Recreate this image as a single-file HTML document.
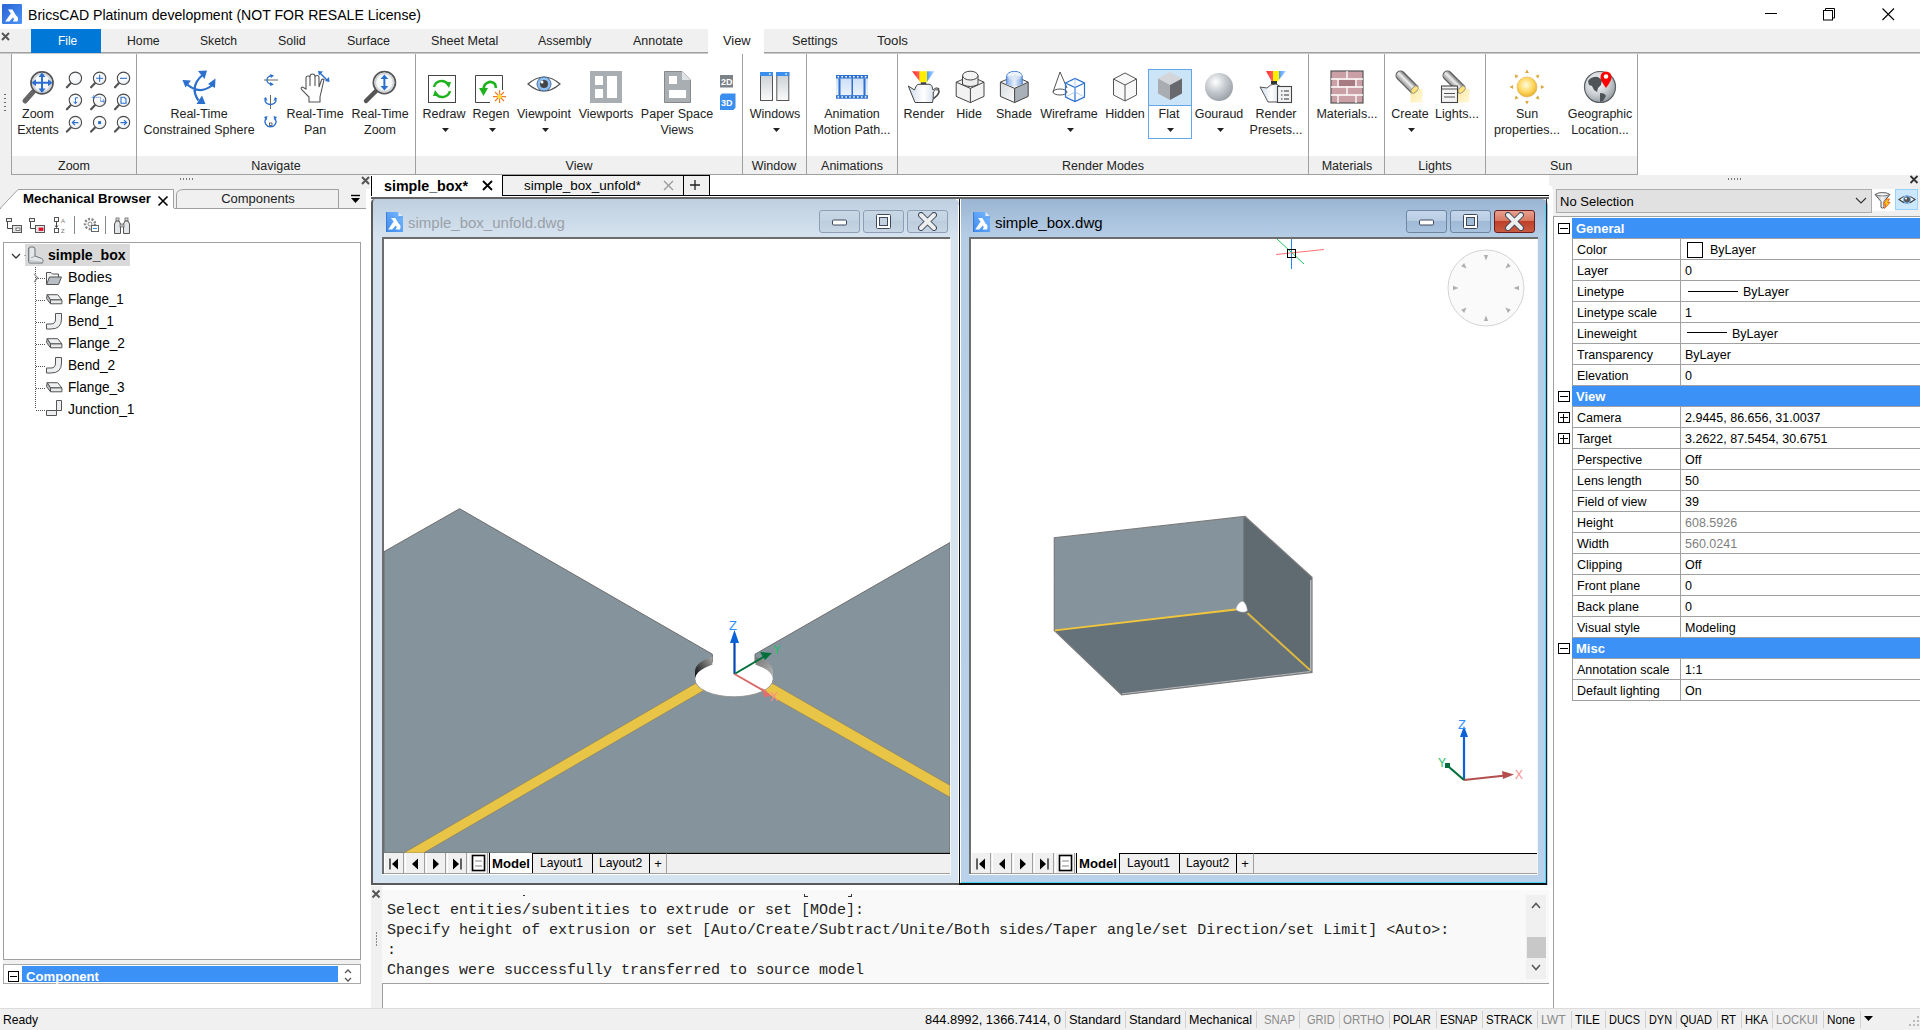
<!DOCTYPE html><html><head><meta charset="utf-8"><style>
html,body{margin:0;padding:0}
body{width:1920px;height:1030px;position:relative;overflow:hidden;background:#fff;font-family:"Liberation Sans",sans-serif;}
.t{position:absolute;white-space:nowrap}
.b{position:absolute;box-sizing:border-box}
.m{font-family:"Liberation Mono",monospace}
</style></head><body>
<svg class="b" style="left:2px;top:4px;" width="20" height="20" viewBox="0 0 20 20"><defs><linearGradient id="ag" x1="0" y1="0" x2="1" y2="1"><stop offset="0" stop-color="#2a62d6"/><stop offset="1" stop-color="#4a94f5"/></linearGradient></defs><rect x="0" y="0" width="20" height="20" rx="1" fill="url(#ag)"/><path d="M6 5.5 H10.5 L14 11.5 Q16.3 12.7 16.1 15.5 L15.5 17.4 H10.8 L12.1 15.2 L11 13.6 L7.3 17.4 H3.2 L8.8 9.6 Z" fill="#fff"/></svg>
<div class="t " style="left:27.8px;top:0.00px;height:30px;line-height:30px;font-size:15px;color:#000;font-weight:normal;transform:scaleX(0.9397);transform-origin:0 50%;">BricsCAD Platinum development (NOT FOR RESALE License)</div>
<div class="b" style="left:1765px;top:13px;width:12px;height:1px;background:#000;"></div>
<svg class="b" style="left:1823px;top:8px;" width="13" height="13" viewBox="0 0 13 13"><rect x="0.5" y="2.5" width="9" height="9.5" fill="none" stroke="#000"/><path d="M2.5 2.5 V0.5 H11.5 V10 H9.5" fill="none" stroke="#000"/></svg>
<svg class="b" style="left:1882px;top:8px;" width="13" height="13" viewBox="0 0 13 13"><path d="M0.5 0.5 L12 12 M12 0.5 L0.5 12" stroke="#000" stroke-width="1.1"/></svg>
<div class="b" style="left:0px;top:29px;width:1920px;height:23px;background:#f0f0f0;"></div>
<svg class="b" style="left:1px;top:32px;" width="9" height="9" viewBox="0 0 9 9"><path d="M1 1 L8 8 M8 1 L1 8" stroke="#555" stroke-width="2"/></svg>
<div class="b" style="left:31px;top:29px;width:70px;height:24px;background:#0078d7;"></div>
<div class="t " style="left:57.8px;top:27.90px;height:26.8px;line-height:26.8px;font-size:13.4px;color:#fff;font-weight:normal;transform:scaleX(0.8885);transform-origin:0 50%;">File</div>
<div class="b" style="left:708px;top:29px;width:56px;height:24px;background:#fff;"></div>
<div class="t " style="left:127.1px;top:27.50px;height:26.8px;line-height:26.8px;font-size:13.4px;color:#222;font-weight:normal;transform:scaleX(0.9143);transform-origin:0 50%;">Home</div>
<div class="t " style="left:200.4px;top:27.50px;height:26.8px;line-height:26.8px;font-size:13.4px;color:#222;font-weight:normal;transform:scaleX(0.9052);transform-origin:0 50%;">Sketch</div>
<div class="t " style="left:278.1px;top:27.50px;height:26.8px;line-height:26.8px;font-size:13.4px;color:#222;font-weight:normal;transform:scaleX(0.9291);transform-origin:0 50%;">Solid</div>
<div class="t " style="left:346.5px;top:27.50px;height:26.8px;line-height:26.8px;font-size:13.4px;color:#222;font-weight:normal;transform:scaleX(0.9328);transform-origin:0 50%;">Surface</div>
<div class="t " style="left:430.6px;top:27.50px;height:26.8px;line-height:26.8px;font-size:13.4px;color:#222;font-weight:normal;transform:scaleX(0.9406);transform-origin:0 50%;">Sheet Metal</div>
<div class="t " style="left:538.3px;top:27.50px;height:26.8px;line-height:26.8px;font-size:13.4px;color:#222;font-weight:normal;transform:scaleX(0.9224);transform-origin:0 50%;">Assembly</div>
<div class="t " style="left:632.5px;top:27.50px;height:26.8px;line-height:26.8px;font-size:13.4px;color:#222;font-weight:normal;transform:scaleX(0.9316);transform-origin:0 50%;">Annotate</div>
<div class="t " style="left:723.1px;top:27.50px;height:26.8px;line-height:26.8px;font-size:13.4px;color:#222;font-weight:normal;transform:scaleX(0.9598);transform-origin:0 50%;">View</div>
<div class="t " style="left:791.5px;top:27.50px;height:26.8px;line-height:26.8px;font-size:13.4px;color:#222;font-weight:normal;transform:scaleX(0.9414);transform-origin:0 50%;">Settings</div>
<div class="t " style="left:876.9px;top:27.50px;height:26.8px;line-height:26.8px;font-size:13.4px;color:#222;font-weight:normal;transform:scaleX(0.9905);transform-origin:0 50%;">Tools</div>
<div class="b" style="left:0px;top:52px;width:1920px;height:1px;background:#a0a0a0;"></div>
<div class="b" style="left:0px;top:53px;width:1920px;height:1px;background:#cacaca;"></div>
<div class="b" style="left:708px;top:52px;width:56px;height:2px;background:#fff;"></div>
<div class="b" style="left:31px;top:52px;width:70px;height:1px;background:#0078d7;"></div>
<div class="b" style="left:0px;top:54px;width:11px;height:121px;background:#f0f0f0;"></div>
<div class="b" style="left:4px;top:94px;width:2px;height:1px;background:#666;"></div>
<div class="b" style="left:4px;top:98px;width:2px;height:1px;background:#666;"></div>
<div class="b" style="left:4px;top:102px;width:2px;height:1px;background:#666;"></div>
<div class="b" style="left:4px;top:106px;width:2px;height:1px;background:#666;"></div>
<div class="b" style="left:4px;top:110px;width:2px;height:1px;background:#666;"></div>
<div class="b" style="left:11px;top:54px;width:1627px;height:121px;border:1px solid #a0a0a0;border-top:none;background:#fff;"></div>
<div class="b" style="left:12px;top:156px;width:1625px;height:18px;background:#f0f0f0;"></div>
<div class="b" style="left:136px;top:54px;width:1px;height:120px;background:#a0a0a0;"></div>
<div class="b" style="left:415px;top:54px;width:1px;height:120px;background:#a0a0a0;"></div>
<div class="b" style="left:742px;top:54px;width:1px;height:120px;background:#a0a0a0;"></div>
<div class="b" style="left:806px;top:54px;width:1px;height:120px;background:#a0a0a0;"></div>
<div class="b" style="left:897px;top:54px;width:1px;height:120px;background:#a0a0a0;"></div>
<div class="b" style="left:1308px;top:54px;width:1px;height:120px;background:#a0a0a0;"></div>
<div class="b" style="left:1384px;top:54px;width:1px;height:120px;background:#a0a0a0;"></div>
<div class="b" style="left:1485px;top:54px;width:1px;height:120px;background:#a0a0a0;"></div>
<div class="t" style="left:-126px;width:400px;text-align:center;top:153.50px;height:25.0px;line-height:25.0px;font-size:12.5px;color:#222;font-weight:normal;">Zoom</div>
<div class="t" style="left:76px;width:400px;text-align:center;top:153.50px;height:25.0px;line-height:25.0px;font-size:12.5px;color:#222;font-weight:normal;">Navigate</div>
<div class="t" style="left:379px;width:400px;text-align:center;top:153.50px;height:25.0px;line-height:25.0px;font-size:12.5px;color:#222;font-weight:normal;">View</div>
<div class="t" style="left:574px;width:400px;text-align:center;top:153.50px;height:25.0px;line-height:25.0px;font-size:12.5px;color:#222;font-weight:normal;">Window</div>
<div class="t" style="left:652px;width:400px;text-align:center;top:153.50px;height:25.0px;line-height:25.0px;font-size:12.5px;color:#222;font-weight:normal;">Animations</div>
<div class="t" style="left:903px;width:400px;text-align:center;top:153.50px;height:25.0px;line-height:25.0px;font-size:12.5px;color:#222;font-weight:normal;">Render Modes</div>
<div class="t" style="left:1147px;width:400px;text-align:center;top:153.50px;height:25.0px;line-height:25.0px;font-size:12.5px;color:#222;font-weight:normal;">Materials</div>
<div class="t" style="left:1235px;width:400px;text-align:center;top:153.50px;height:25.0px;line-height:25.0px;font-size:12.5px;color:#222;font-weight:normal;">Lights</div>
<div class="t" style="left:1361px;width:400px;text-align:center;top:153.50px;height:25.0px;line-height:25.0px;font-size:12.5px;color:#222;font-weight:normal;">Sun</div>
<div class="b" style="left:1148px;top:69px;width:44px;height:70px;border:1px solid #63a7ea;"></div>
<div class="b" style="left:1149px;top:70px;width:42px;height:35px;background:#cce4f7;"></div>
<div class="b" style="left:1148px;top:105px;width:44px;height:1px;background:#63a7ea;"></div>
<div class="t" style="left:-162px;width:400px;text-align:center;top:101.50px;height:25.0px;line-height:25.0px;font-size:12.5px;color:#222;font-weight:normal;">Zoom</div>
<div class="t" style="left:-162px;width:400px;text-align:center;top:117.50px;height:25.0px;line-height:25.0px;font-size:12.5px;color:#222;font-weight:normal;">Extents</div>
<div class="t" style="left:-1px;width:400px;text-align:center;top:101.50px;height:25.0px;line-height:25.0px;font-size:12.5px;color:#222;font-weight:normal;">Real-Time</div>
<div class="t" style="left:-1px;width:400px;text-align:center;top:117.50px;height:25.0px;line-height:25.0px;font-size:12.5px;color:#222;font-weight:normal;">Constrained Sphere</div>
<div class="t" style="left:115px;width:400px;text-align:center;top:101.50px;height:25.0px;line-height:25.0px;font-size:12.5px;color:#222;font-weight:normal;">Real-Time</div>
<div class="t" style="left:115px;width:400px;text-align:center;top:117.50px;height:25.0px;line-height:25.0px;font-size:12.5px;color:#222;font-weight:normal;">Pan</div>
<div class="t" style="left:180px;width:400px;text-align:center;top:101.50px;height:25.0px;line-height:25.0px;font-size:12.5px;color:#222;font-weight:normal;">Real-Time</div>
<div class="t" style="left:180px;width:400px;text-align:center;top:117.50px;height:25.0px;line-height:25.0px;font-size:12.5px;color:#222;font-weight:normal;">Zoom</div>
<div class="t" style="left:244px;width:400px;text-align:center;top:101.50px;height:25.0px;line-height:25.0px;font-size:12.5px;color:#222;font-weight:normal;">Redraw</div>
<svg class="b" style="left:441.5px;top:127.5px;" width="8" height="5" viewBox="0 0 8 5"><path d="M0 0 H7 L3.5 4 Z" fill="#222"/></svg>
<div class="t" style="left:291px;width:400px;text-align:center;top:101.50px;height:25.0px;line-height:25.0px;font-size:12.5px;color:#222;font-weight:normal;">Regen</div>
<svg class="b" style="left:488.5px;top:127.5px;" width="8" height="5" viewBox="0 0 8 5"><path d="M0 0 H7 L3.5 4 Z" fill="#222"/></svg>
<div class="t" style="left:344px;width:400px;text-align:center;top:101.50px;height:25.0px;line-height:25.0px;font-size:12.5px;color:#222;font-weight:normal;">Viewpoint</div>
<svg class="b" style="left:541.5px;top:127.5px;" width="8" height="5" viewBox="0 0 8 5"><path d="M0 0 H7 L3.5 4 Z" fill="#222"/></svg>
<div class="t" style="left:406px;width:400px;text-align:center;top:101.50px;height:25.0px;line-height:25.0px;font-size:12.5px;color:#222;font-weight:normal;">Viewports</div>
<div class="t" style="left:477px;width:400px;text-align:center;top:101.50px;height:25.0px;line-height:25.0px;font-size:12.5px;color:#222;font-weight:normal;">Paper Space</div>
<div class="t" style="left:477px;width:400px;text-align:center;top:117.50px;height:25.0px;line-height:25.0px;font-size:12.5px;color:#222;font-weight:normal;">Views</div>
<div class="t" style="left:575px;width:400px;text-align:center;top:101.50px;height:25.0px;line-height:25.0px;font-size:12.5px;color:#222;font-weight:normal;">Windows</div>
<svg class="b" style="left:772.5px;top:127.5px;" width="8" height="5" viewBox="0 0 8 5"><path d="M0 0 H7 L3.5 4 Z" fill="#222"/></svg>
<div class="t" style="left:652px;width:400px;text-align:center;top:101.50px;height:25.0px;line-height:25.0px;font-size:12.5px;color:#222;font-weight:normal;">Animation</div>
<div class="t" style="left:652px;width:400px;text-align:center;top:117.50px;height:25.0px;line-height:25.0px;font-size:12.5px;color:#222;font-weight:normal;">Motion Path...</div>
<div class="t" style="left:724px;width:400px;text-align:center;top:101.50px;height:25.0px;line-height:25.0px;font-size:12.5px;color:#222;font-weight:normal;">Render</div>
<div class="t" style="left:769px;width:400px;text-align:center;top:101.50px;height:25.0px;line-height:25.0px;font-size:12.5px;color:#222;font-weight:normal;">Hide</div>
<div class="t" style="left:814px;width:400px;text-align:center;top:101.50px;height:25.0px;line-height:25.0px;font-size:12.5px;color:#222;font-weight:normal;">Shade</div>
<div class="t" style="left:869px;width:400px;text-align:center;top:101.50px;height:25.0px;line-height:25.0px;font-size:12.5px;color:#222;font-weight:normal;">Wireframe</div>
<svg class="b" style="left:1066.5px;top:127.5px;" width="8" height="5" viewBox="0 0 8 5"><path d="M0 0 H7 L3.5 4 Z" fill="#222"/></svg>
<div class="t" style="left:925px;width:400px;text-align:center;top:101.50px;height:25.0px;line-height:25.0px;font-size:12.5px;color:#222;font-weight:normal;">Hidden</div>
<div class="t" style="left:969px;width:400px;text-align:center;top:101.50px;height:25.0px;line-height:25.0px;font-size:12.5px;color:#222;font-weight:normal;">Flat</div>
<svg class="b" style="left:1166.5px;top:127.5px;" width="8" height="5" viewBox="0 0 8 5"><path d="M0 0 H7 L3.5 4 Z" fill="#222"/></svg>
<div class="t" style="left:1019px;width:400px;text-align:center;top:101.50px;height:25.0px;line-height:25.0px;font-size:12.5px;color:#222;font-weight:normal;">Gouraud</div>
<svg class="b" style="left:1216.5px;top:127.5px;" width="8" height="5" viewBox="0 0 8 5"><path d="M0 0 H7 L3.5 4 Z" fill="#222"/></svg>
<div class="t" style="left:1076px;width:400px;text-align:center;top:101.50px;height:25.0px;line-height:25.0px;font-size:12.5px;color:#222;font-weight:normal;">Render</div>
<div class="t" style="left:1076px;width:400px;text-align:center;top:117.50px;height:25.0px;line-height:25.0px;font-size:12.5px;color:#222;font-weight:normal;">Presets...</div>
<div class="t" style="left:1147px;width:400px;text-align:center;top:101.50px;height:25.0px;line-height:25.0px;font-size:12.5px;color:#222;font-weight:normal;">Materials...</div>
<div class="t" style="left:1210px;width:400px;text-align:center;top:101.50px;height:25.0px;line-height:25.0px;font-size:12.5px;color:#222;font-weight:normal;">Create</div>
<svg class="b" style="left:1407.5px;top:127.5px;" width="8" height="5" viewBox="0 0 8 5"><path d="M0 0 H7 L3.5 4 Z" fill="#222"/></svg>
<div class="t" style="left:1257px;width:400px;text-align:center;top:101.50px;height:25.0px;line-height:25.0px;font-size:12.5px;color:#222;font-weight:normal;">Lights...</div>
<div class="t" style="left:1327px;width:400px;text-align:center;top:101.50px;height:25.0px;line-height:25.0px;font-size:12.5px;color:#222;font-weight:normal;">Sun</div>
<div class="t" style="left:1327px;width:400px;text-align:center;top:117.50px;height:25.0px;line-height:25.0px;font-size:12.5px;color:#222;font-weight:normal;">properties...</div>
<div class="t" style="left:1400px;width:400px;text-align:center;top:101.50px;height:25.0px;line-height:25.0px;font-size:12.5px;color:#222;font-weight:normal;">Geographic</div>
<div class="t" style="left:1400px;width:400px;text-align:center;top:117.50px;height:25.0px;line-height:25.0px;font-size:12.5px;color:#222;font-weight:normal;">Location...</div>
<svg class="b" style="left:0;top:0" width="1920" height="180" viewBox="0 0 1920 180"><defs>
<radialGradient id="lens" cx="0.4" cy="0.35" r="0.7"><stop offset="0" stop-color="#fff"/><stop offset="0.7" stop-color="#f4f6f8"/><stop offset="1" stop-color="#d8dde2"/></radialGradient>
<linearGradient id="gwin" x1="0" y1="0" x2="0" y2="1"><stop offset="0" stop-color="#c8cdd2"/><stop offset="1" stop-color="#fbfbfb"/></linearGradient>
<linearGradient id="gfilm" x1="0" y1="0" x2="0" y2="1"><stop offset="0" stop-color="#c9dbf5"/><stop offset="1" stop-color="#f2f7fd"/></linearGradient>
<radialGradient id="gsph" cx="0.38" cy="0.32" r="0.7"><stop offset="0" stop-color="#fff"/><stop offset="0.5" stop-color="#c8ccd1"/><stop offset="1" stop-color="#9aa1a8"/></radialGradient>
<radialGradient id="gsun" cx="0.45" cy="0.4" r="0.6"><stop offset="0" stop-color="#fffbe0"/><stop offset="0.6" stop-color="#ffd860"/><stop offset="1" stop-color="#e8b030"/></radialGradient>
<radialGradient id="gglobe" cx="0.4" cy="0.35" r="0.7"><stop offset="0" stop-color="#fff"/><stop offset="0.6" stop-color="#c8ccd0"/><stop offset="1" stop-color="#8f969c"/></radialGradient>
<linearGradient id="gcyl" x1="0" y1="0" x2="1" y2="0"><stop offset="0" stop-color="#8fb3e6"/><stop offset="0.5" stop-color="#e6f0fc"/><stop offset="1" stop-color="#7ea6dc"/></linearGradient>
<linearGradient id="gspot" x1="0" y1="0" x2="1" y2="1"><stop offset="0" stop-color="#777"/><stop offset="0.5" stop-color="#e8e8e8"/><stop offset="1" stop-color="#9a9a9a"/></linearGradient>
<linearGradient id="gspot2" x1="0" y1="0" x2="0" y2="1"><stop offset="0" stop-color="#6a6a6a"/><stop offset="0.45" stop-color="#f0f0f0"/><stop offset="1" stop-color="#8a8a8a"/></linearGradient>
<linearGradient id="gcubeL" x1="0" y1="0" x2="1" y2="1"><stop offset="0" stop-color="#d8dce0"/><stop offset="1" stop-color="#fafafa"/></linearGradient>
<linearGradient id="gyel" x1="0" y1="0" x2="1" y2="1"><stop offset="0" stop-color="#ffe9a0"/><stop offset="1" stop-color="#fff8dc"/></linearGradient>
<linearGradient id="grays" x1="0" y1="0" x2="1" y2="0"><stop offset="0" stop-color="#ff2a2a"/><stop offset="0.33" stop-color="#ff6060"/><stop offset="0.34" stop-color="#ffee00"/><stop offset="0.66" stop-color="#ffee00"/><stop offset="0.67" stop-color="#4d9cff"/><stop offset="1" stop-color="#b0d4ff"/></linearGradient>
<linearGradient id="gpot" x1="0" y1="0" x2="1" y2="0"><stop offset="0" stop-color="#cfdcec"/><stop offset="0.5" stop-color="#fff"/><stop offset="1" stop-color="#c4d3e6"/></linearGradient>
</defs><path d="M33 92 L25 101" stroke="#666" stroke-width="5" stroke-linecap="round"/><circle cx="42" cy="82.8" r="11" fill="url(#lens)" stroke="#555" stroke-width="1.8"/><circle cx="42" cy="82.8" r="9.2" fill="none" stroke="#cfd3d6" stroke-width="1.8"/><path d="M42 74 V92 M33 82.8 H51" stroke="#2b6fcf" stroke-width="2"/><path d="M38.5 77 L42 72.5 L45.5 77 Z M38.5 88.6 L42 93 L45.5 88.6 Z M36 79.3 L31.5 82.8 L36 86.3 Z M48 79.3 L52.5 82.8 L48 86.3 Z" fill="#2b6fcf"/><path d="M70.9 83.1 L66.9 87.3" stroke="#555" stroke-width="2.2" stroke-linecap="round"/><circle cx="75.4" cy="78.3" r="6.2" fill="url(#lens)" stroke="#4a4a4a" stroke-width="1.1"/><path d="M95.1 83.1 L91.1 87.3" stroke="#555" stroke-width="2.2" stroke-linecap="round"/><circle cx="99.6" cy="78.3" r="6.2" fill="url(#lens)" stroke="#4a4a4a" stroke-width="1.1"/><path d="M96.1 78.3 H103.1 M99.6 74.8 V81.8" stroke="#2b6fcf" stroke-width="1.1"/><path d="M119.0 83.1 L115.0 87.3" stroke="#555" stroke-width="2.2" stroke-linecap="round"/><circle cx="123.5" cy="78.3" r="6.2" fill="url(#lens)" stroke="#4a4a4a" stroke-width="1.1"/><path d="M120.0 78.3 H127.0" stroke="#2b6fcf" stroke-width="1.1"/><path d="M70.9 105.1 L66.9 109.3" stroke="#555" stroke-width="2.2" stroke-linecap="round"/><circle cx="75.4" cy="100.3" r="6.2" fill="url(#lens)" stroke="#4a4a4a" stroke-width="1.1"/><path d="M77.9 97.8 H75.4 V103.3 M73.60000000000001 101.8 L75.4 103.8 L77.2 101.8" fill="none" stroke="#2b6fcf" stroke-width="1"/><path d="M95.1 105.1 L91.1 109.3" stroke="#555" stroke-width="2.2" stroke-linecap="round"/><circle cx="99.6" cy="100.3" r="6.2" fill="url(#lens)" stroke="#4a4a4a" stroke-width="1.1"/><path d="M93.6 97.3 H100.6 V101.3 H103.6 M91.6 97.3 H95.6 M93.6 95.3 V99.3 M101.6 101.3 H105.6 M103.6 99.3 V103.3" fill="none" stroke="#2b6fcf" stroke-width="0.9" stroke-dasharray="1.2 0.8"/><path d="M119.0 105.1 L115.0 109.3" stroke="#555" stroke-width="2.2" stroke-linecap="round"/><circle cx="123.5" cy="100.3" r="6.2" fill="url(#lens)" stroke="#4a4a4a" stroke-width="1.1"/><path d="M121.0 97.3 H124.3 L126.0 99.0 V103.3 H121.0 Z" fill="none" stroke="#2b6fcf" stroke-width="1.1"/><path d="M70.9 127.4 L66.9 131.6" stroke="#555" stroke-width="2.2" stroke-linecap="round"/><circle cx="75.4" cy="122.6" r="6.2" fill="url(#lens)" stroke="#4a4a4a" stroke-width="1.1"/><path d="M78.4 122.6 H72.4 M74.9 120.1 L72.4 122.6 L74.9 125.1" fill="none" stroke="#2b6fcf" stroke-width="1.3"/><path d="M95.1 127.4 L91.1 131.6" stroke="#555" stroke-width="2.2" stroke-linecap="round"/><circle cx="99.6" cy="122.6" r="6.2" fill="url(#lens)" stroke="#4a4a4a" stroke-width="1.1"/><rect x="98.1" y="121.1" width="3" height="3" fill="#2b6fcf"/><path d="M119.0 127.4 L115.0 131.6" stroke="#555" stroke-width="2.2" stroke-linecap="round"/><circle cx="123.5" cy="122.6" r="6.2" fill="url(#lens)" stroke="#4a4a4a" stroke-width="1.1"/><path d="M120.5 122.6 H126.5 M124.0 120.1 L126.5 122.6 L124.0 125.1" fill="none" stroke="#2b6fcf" stroke-width="1.3"/><path d="M202.5 75 Q189 87 198.5 100.5 M186 83.5 Q199 95.5 212 85.5" fill="none" stroke="#2b6fcf" stroke-width="2.2"/><path d="M198 71 L207 70.5 L204.5 79 Z M182.5 80 L191 80.5 L185.5 87.5 Z M215.5 78.5 L215 88 L208 84 Z M196.5 104 L205.5 104 L202 95.5 Z" fill="#2b6fcf"/><path d="M264 80 H278" stroke="#555" stroke-width="0.9"/><path d="M271 76 A4 4 0 1 0 271 84" fill="none" stroke="#2b6fcf" stroke-width="1.4"/><path d="M270 74 L274 75.5 L271 78 Z M270 82 L274 84.5 L270 86 Z" fill="#2b6fcf"/><path d="M270.5 95 V109" stroke="#555" stroke-width="0.9"/><path d="M265 100 A5.5 4.5 0 0 0 276 100" fill="none" stroke="#2b6fcf" stroke-width="1.4"/><path d="M263.5 99 L266 97 L267.5 101 Z M277.5 99 L275 97 L273.5 101 Z" fill="#2b6fcf"/><path d="M265.5 119 A5.5 5.5 0 1 0 275.5 119" fill="none" stroke="#2b6fcf" stroke-width="1.4"/><path d="M264 117 L267.5 116 L266.5 120.5 Z M277 117 L273.5 116 L274.5 120.5 Z" fill="#2b6fcf"/><rect x="269.5" y="123" width="2.5" height="2.5" fill="none" stroke="#333" stroke-width="0.7"/><path d="M309 102 V97 L302 90 Q300 87.5 302.5 87 L306 89 V78 Q306 76 308 76 Q310 76 310 78 V86 V76.5 Q310 74 312.5 74 Q315 74 315 76.5 V86 V77.5 Q315 75.5 317 75.5 Q319 75.5 319 77.5 V87 L321.5 80 Q322.5 78.5 324 79.5 L320 97 V102 Z" fill="#fff" stroke="#555" stroke-width="1.1"/><path d="M320 73 L327 80" stroke="#2b6fcf" stroke-width="1.5"/><path d="M318 71 L323 71.5 L319 75.5 Z M329.5 82 L329 77 L325 81 Z" fill="#2b6fcf"/><path d="M376 91 L366 101" stroke="#555" stroke-width="4.5" stroke-linecap="round"/><circle cx="384.4" cy="82.6" r="11" fill="url(#lens)" stroke="#555" stroke-width="1.8"/><circle cx="384.4" cy="82.6" r="9.2" fill="none" stroke="#cfd3d6" stroke-width="1.8"/><path d="M384.4 77 V88" stroke="#2b6fcf" stroke-width="2"/><path d="M380.5 79 L384.4 74.5 L388.3 79 Z M380.5 86 L384.4 90.5 L388.3 86 Z" fill="#2b6fcf"/><rect x="428.5" y="75.5" width="27" height="27" fill="#fff" stroke="#444" stroke-width="1"/><path d="M434 87 A8 8 0 0 1 448 84 M450 91 A8 8 0 0 1 436 94" fill="none" stroke="#1eb31e" stroke-width="2.4"/><path d="M444.5 82 L451 82 L449 88 Z M439.5 96 L433 96 L435 90 Z" fill="#1eb31e"/><path d="M475.5 102.5 V75.5 H502.5 V90" fill="none" stroke="#444" stroke-width="1"/><path d="M475.5 102.5 H490" stroke="#444"/><path d="M484 90 A6.5 6.5 0 0 1 495 84 L496 88" fill="none" stroke="#1eb31e" stroke-width="2.6"/><path d="M479 88 L488 88 L483.5 96 Z" fill="#1eb31e"/><path d="M499.6 90 V103 M493 96.6 H506 M495 92 L504 101 M504 92 L495 101" stroke="#f07a20" stroke-width="1.1"/><circle cx="499.6" cy="96.6" r="2.2" fill="#ffe040"/><path d="M528 84 Q544 70 560 84 Q544 98 528 84 Z" fill="#fff" stroke="#555" stroke-width="1.2"/><circle cx="544" cy="84" r="7" fill="#8cc0f5" stroke="#4a6f9a" stroke-width="1"/><circle cx="544" cy="84" r="4" fill="#444"/><circle cx="542" cy="82" r="1.5" fill="#fff"/><rect x="590" y="71" width="32" height="32" fill="#a9aeb3"/><rect x="595" y="76" width="8" height="9" fill="#fff"/><rect x="595" y="89" width="8" height="9" fill="#fff"/><rect x="607" y="76" width="10" height="22" fill="#fff"/><path d="M664.5 71.5 H682 L690.5 80 V102.5 H664.5 Z" fill="#a9aeb3" stroke="#888" stroke-width="1"/><path d="M682 71.5 V80 H690.5 Z" fill="#e0e3e6"/><rect x="669" y="76" width="8" height="8" fill="#fff"/><rect x="669" y="90" width="17" height="8" fill="#fff"/><rect x="720" y="75" width="13" height="12.5" fill="#7b8288"/><text x="721" y="85" font-size="9" fill="#fff" font-family="Liberation Sans" font-weight="bold">2D</text><path d="M720 95.5 L722 93.5 H735.5 V107.5 L733.5 110 H720 Z" fill="#3a8ef0"/><text x="721" y="106" font-size="9" fill="#fff" font-family="Liberation Sans" font-weight="bold">3D</text><rect x="760.5" y="72.5" width="12" height="28" fill="url(#gwin)" stroke="#555" stroke-width="1"/><rect x="760" y="72" width="13" height="4" fill="#3a8ef0"/><rect x="769" y="73.3" width="1.5" height="1.5" fill="#fff"/><rect x="776.8" y="72.5" width="12" height="28" fill="url(#gwin)" stroke="#555" stroke-width="1"/><rect x="776.3" y="72" width="13" height="4" fill="#3a8ef0"/><rect x="785.3" y="73.3" width="1.5" height="1.5" fill="#fff"/><rect x="836" y="75" width="32" height="24" fill="url(#gfilm)"/><rect x="836" y="75" width="32" height="3.5" fill="#2b6fcf"/><rect x="836" y="95.2" width="32" height="3.5" fill="#2b6fcf"/><rect x="838.5" y="78.5" width="2" height="17" fill="#2b6fcf"/><rect x="851.5" y="78.5" width="1.5" height="17" fill="#2b6fcf"/><rect x="863.5" y="78.5" width="2" height="17" fill="#2b6fcf"/><rect x="837.5" y="76" width="1.6" height="1.5" fill="#fff"/><rect x="837.5" y="96.2" width="1.6" height="1.5" fill="#fff"/><rect x="841.4" y="76" width="1.6" height="1.5" fill="#fff"/><rect x="841.4" y="96.2" width="1.6" height="1.5" fill="#fff"/><rect x="845.3" y="76" width="1.6" height="1.5" fill="#fff"/><rect x="845.3" y="96.2" width="1.6" height="1.5" fill="#fff"/><rect x="849.2" y="76" width="1.6" height="1.5" fill="#fff"/><rect x="849.2" y="96.2" width="1.6" height="1.5" fill="#fff"/><rect x="853.1" y="76" width="1.6" height="1.5" fill="#fff"/><rect x="853.1" y="96.2" width="1.6" height="1.5" fill="#fff"/><rect x="857.0" y="76" width="1.6" height="1.5" fill="#fff"/><rect x="857.0" y="96.2" width="1.6" height="1.5" fill="#fff"/><rect x="860.9" y="76" width="1.6" height="1.5" fill="#fff"/><rect x="860.9" y="96.2" width="1.6" height="1.5" fill="#fff"/><rect x="864.8" y="76" width="1.6" height="1.5" fill="#fff"/><rect x="864.8" y="96.2" width="1.6" height="1.5" fill="#fff"/><g transform="translate(0 0)"><path d="M912 71.2 L920.5 82.5 H926.5 L934.3 71.2 Z" fill="url(#grays)"/><rect x="920.8" y="82.3" width="5.4" height="2.4" fill="#3a3f48"/><path d="M938.5 90 Q940 92 937 95.5 L933.2 99" fill="none" stroke="#444" stroke-width="1.6"/><path d="M908.3 86 L914.5 90 Q916 85 918 84.3 H930.3 Q932.5 86 933 90 Q936 86.5 939 88.5 L938 90 Q935.5 88.5 933.3 92 L933.2 98.5 L932.5 102.5 H915 Z" fill="url(#gpot)" stroke="#444" stroke-width="1"/></g><g transform="translate(0 0)"><path d="M956.2 82.2 L970.4 88.4 V102.6 L956.2 96.4 Z" fill="#f2f2f2"/><path d="M970.4 88.4 L984 82.2 V96.4 L970.4 102.6 Z" fill="#f2f2f2"/><path d="M956.2 82.2 L970.4 76 L984 82.2 L970.4 88.4 Z" fill="#f2f2f2"/><path d="M956.2 82.2 L970.4 76 L984 82.2 V96.4 L970.4 102.6 L956.2 96.4 Z M956.2 82.2 L970.4 88.4 L984 82.2 M970.4 88.4 V102.6" fill="none" stroke="#444" stroke-width="1"/><path d="M962.5 75.6 V84.5 Q970.3 88.5 978 84.5 V75.6" fill="#eeeeee" stroke="#444" stroke-width="1"/><ellipse cx="970.3" cy="75.6" rx="7.7" ry="4.4" fill="#f4f4f4" stroke="#444" stroke-width="1"/></g><g transform="translate(44.2 0)"><path d="M956.2 82.2 L970.4 88.4 V102.6 L956.2 96.4 Z" fill="url(#gcubeL)"/><path d="M970.4 88.4 L984 82.2 V96.4 L970.4 102.6 Z" fill="#aab0b8"/><path d="M956.2 82.2 L970.4 76 L984 82.2 L970.4 88.4 Z" fill="#eef0f2"/><path d="M956.2 82.2 L970.4 76 L984 82.2 V96.4 L970.4 102.6 L956.2 96.4 Z M956.2 82.2 L970.4 88.4 L984 82.2 M970.4 88.4 V102.6" fill="none" stroke="#444" stroke-width="1"/><path d="M962.5 76 V84.5 Q970.3 88.5 978 84.5 V76 Z" fill="url(#gcyl)"/><path d="M962.5 84 V76 A7.7 4.6 0 0 1 978 76 V84" fill="none" stroke="#3d7ad6" stroke-width="1"/><ellipse cx="970.3" cy="76" rx="7.2" ry="4.2" fill="#dde9f7" opacity="0.6"/></g><path d="M1060 72 L1053 92 M1060 72 L1067 88" fill="none" stroke="#555" stroke-width="1"/><ellipse cx="1060" cy="92" rx="7" ry="3" fill="none" stroke="#555" stroke-width="1"/><path d="M1065.5 83 L1075 78.5 L1084.5 83 V97 L1075 101.5 L1065.5 97 Z M1065.5 83 L1075 87.5 L1084.5 83 M1075 87.5 V101.5" fill="none" stroke="#2b6fcf" stroke-width="1.2"/><path d="M1075 78.5 V92 M1065.5 97 L1075 92 L1084.5 97" fill="none" stroke="#9cc0ef" stroke-width="0.8"/><path d="M1113.5 79 L1125 73 L1136.5 79 V95 L1125 101 L1113.5 95 Z" fill="#f8f8f8" stroke="#555" stroke-width="1"/><path d="M1113.5 79 L1125 85 L1136.5 79 M1125 85 V101" fill="none" stroke="#555" stroke-width="1"/><path d="M1158 78.5 L1170 72 L1182 78.5 L1170 85 Z" fill="#d3d5d8"/><path d="M1158 78.5 L1170 85 V100 L1158 93.5 Z" fill="#a9acb0"/><path d="M1170 85 L1182 78.5 V93.5 L1170 100 Z" fill="#67696c"/><circle cx="1219" cy="87" r="14" fill="url(#gsph)"/><path d="M1266 71 L1272 82 L1277 82 L1286 71 Z" fill="url(#grays)"/><rect x="1271" y="81" width="6" height="3" fill="#333"/><path d="M1260 87 L1267 88 Q1270 84 1276 84 L1283 88 V102 H1268 Q1265 96 1260 87 Z" fill="url(#gpot)" stroke="#555" stroke-width="1"/><rect x="1277.5" y="86.5" width="14" height="16" fill="#f0f2f4" stroke="#444" stroke-width="1.1"/><path d="M1281 91 H1282.5 M1284 91 H1289 M1281 95 H1282.5 M1284 95 H1289 M1281 99 H1282.5 M1284 99 H1289" stroke="#333" stroke-width="1"/><rect x="1331" y="71" width="32" height="32" fill="#caa0a6" stroke="#555" stroke-width="1.2"/><path d="M1331 79 H1363 M1331 87 H1363 M1331 95 H1363 M1347 71 V79 M1338 79 V87 M1356 79 V87 M1347 87 V95 M1338 95 V103 M1356 95 V103" stroke="#fff" stroke-width="1.3"/><rect x="1339" y="80" width="16" height="6" fill="#a77b81"/><rect x="1410.5" y="89" width="12" height="13.5" fill="url(#gyel)"/><g transform="translate(1400.5 75.5) rotate(45)"><path d="M0 -4.5 H20 V4.5 H0 A4.5 4.5 0 0 1 0 -4.5 Z" fill="url(#gspot2)" stroke="#555" stroke-width="1"/><ellipse cx="20" cy="0" rx="2.6" ry="4.5" fill="#ffe27a" stroke="#888" stroke-width="0.8"/></g><rect x="1457.5" y="89" width="12" height="13.5" fill="url(#gyel)"/><g transform="translate(1447.5 75.5) rotate(45)"><path d="M0 -4.5 H20 V4.5 H0 A4.5 4.5 0 0 1 0 -4.5 Z" fill="url(#gspot2)" stroke="#555" stroke-width="1"/><ellipse cx="20" cy="0" rx="2.6" ry="4.5" fill="#ffe27a" stroke="#888" stroke-width="0.8"/></g><rect x="1441.5" y="86" width="16" height="16.5" fill="#f4f4f4" stroke="#444" stroke-width="1.1"/><path d="M1442 89 H1457 M1444 93.5 H1455 M1444 97 H1455" stroke="#555" stroke-width="1"/><circle cx="1527" cy="87" r="10" fill="url(#gsun)" stroke="#e0b050" stroke-width="0.6"/><polygon points="1544.5,87.0 1540.9,88.9 1540.9,85.1" fill="#d9a83a"/><polygon points="1539.4,99.4 1535.5,98.2 1538.2,95.5" fill="#d9a83a"/><polygon points="1527.0,104.5 1525.1,100.9 1528.9,100.9" fill="#d9a83a"/><polygon points="1514.6,99.4 1515.8,95.5 1518.5,98.2" fill="#d9a83a"/><polygon points="1509.5,87.0 1513.1,85.1 1513.1,88.9" fill="#d9a83a"/><polygon points="1514.6,74.6 1518.5,75.8 1515.8,78.5" fill="#d9a83a"/><polygon points="1527.0,69.5 1528.9,73.1 1525.1,73.1" fill="#d9a83a"/><polygon points="1539.4,74.6 1538.2,78.5 1535.5,75.8" fill="#d9a83a"/><circle cx="1600" cy="87" r="15.5" fill="url(#gglobe)" stroke="#5a5f63" stroke-width="1.2"/><path d="M1588 81 Q1592 76 1598 77 L1602 80 L1601 85 L1598 88 L1597 92 L1594 90 L1592 86 L1589 85 Z M1600 93 Q1605 93 1606 96 L1603 101 L1600 102 Q1600 97 1600 93 Z" fill="#4f5458"/><path d="M1606 88 Q1600 80 1600.5 77 A5.5 5.5 0 1 1 1611.5 77 Q1612 80 1606 88 Z" fill="#f00"/><circle cx="1606" cy="76.5" r="2.3" fill="#fff"/></svg>
<div class="b" style="left:0px;top:175px;width:1920px;height:14px;background:#f0f0f0;"></div>
<div class="b" style="left:0px;top:189px;width:366px;height:20px;background:#f0f0f0;"></div>
<div class="b" style="left:180px;top:178px;width:1px;height:2px;background:#777;"></div>
<div class="b" style="left:183px;top:178px;width:1px;height:2px;background:#777;"></div>
<div class="b" style="left:186px;top:178px;width:1px;height:2px;background:#777;"></div>
<div class="b" style="left:189px;top:178px;width:1px;height:2px;background:#777;"></div>
<div class="b" style="left:192px;top:178px;width:1px;height:2px;background:#777;"></div>
<svg class="b" style="left:361px;top:176px;" width="9" height="9" viewBox="0 0 9 9"><path d="M1 1 L8 8 M8 1 L1 8" stroke="#555" stroke-width="2"/></svg>
<svg class="b" style="left:0px;top:189px;" width="366" height="20" viewBox="0 0 366 20"><path d="M0 19.5 L18 0.5 H173.5 V19.5" fill="#fff" stroke="#a0a0a0"/><path d="M176.5 19.5 V6 Q176.5 0.5 184 0.5 H338.5 V19.5" fill="#f0f0f0" stroke="#a0a0a0"/><path d="M0 19.5 H366" stroke="#a0a0a0"/></svg>
<div class="b" style="left:1px;top:208px;width:173px;height:2px;background:#fff;"></div>
<div class="t " style="left:22.5px;top:186.00px;height:26px;line-height:26px;font-size:13px;color:#000;font-weight:bold;transform:scaleX(1.0181);transform-origin:0 50%;">Mechanical Browser</div>
<svg class="b" style="left:157px;top:194.5px;" width="12" height="12" viewBox="0 0 12 12"><path d="M1.5 1.5 L10.5 10.5 M10.5 1.5 L1.5 10.5" stroke="#000" stroke-width="1.6"/></svg>
<div class="t" style="left:58px;width:400px;text-align:center;top:186.00px;height:26px;line-height:26px;font-size:13px;color:#222;font-weight:normal;">Components</div>
<svg class="b" style="left:350px;top:194px;" width="11" height="10" viewBox="0 0 11 10"><path d="M1 1.5 H10" stroke="#000" stroke-width="1.4"/><path d="M1 4 H10 L5.5 9 Z" fill="#000"/></svg>
<div class="b" style="left:0px;top:209px;width:366px;height:799px;background:#fff;"></div>
<svg class="b" style="left:6px;top:217px;" width="17" height="17" viewBox="0 0 17 17"><path d="M1.5 5 V11.5 H6" fill="none" stroke="#444"/><rect x="0.5" y="1.5" width="5" height="3" fill="#eee" stroke="#555"/><rect x="6.5" y="8.5" width="9" height="7" fill="#e5e5e5" stroke="#555"/><rect x="10" y="11" width="4" height="2.5" fill="#fff" stroke="#555" stroke-width="0.8"/></svg>
<svg class="b" style="left:29px;top:217px;" width="17" height="17" viewBox="0 0 17 17"><path d="M1.5 5 V11.5 H6" fill="none" stroke="#444"/><rect x="0.5" y="1.5" width="5" height="3" fill="#eee" stroke="#555"/><rect x="6.5" y="8.5" width="9" height="7" fill="#e5e5e5" stroke="#555"/><rect x="10" y="11" width="4" height="2.5" fill="#e0102a" stroke="#e0102a" stroke-width="0.8"/></svg>
<svg class="b" style="left:54px;top:217px;" width="13" height="17" viewBox="0 0 13 17"><rect x="0.5" y="0.5" width="4" height="4" fill="#fff" stroke="#555"/><rect x="0.5" y="11.5" width="4" height="4" fill="#fff" stroke="#555"/><path d="M2.5 5 V10 M1 8.5 L2.5 10.5 L4 8.5" fill="none" stroke="#444"/><text x="7" y="6" font-size="6" fill="#777" font-family="Liberation Sans">A</text><text x="7" y="16" font-size="6" fill="#777" font-family="Liberation Sans">Z</text></svg>
<div class="b" style="left:74px;top:216px;width:1px;height:18px;background:#888;"></div>
<svg class="b" style="left:83px;top:217px;" width="17" height="17" viewBox="0 0 17 17"><circle cx="7" cy="7" r="5" fill="none" stroke="#888" stroke-width="2.5" stroke-dasharray="2 1.5"/><circle cx="7" cy="7" r="2" fill="#fff" stroke="#888"/><rect x="8.5" y="8.5" width="7" height="6" fill="#fff" stroke="#666"/><path d="M10 11.5 H14" stroke="#3a8ee6"/></svg>
<div class="b" style="left:105px;top:216px;width:1px;height:18px;background:#888;"></div>
<svg class="b" style="left:114px;top:217px;" width="17" height="17" viewBox="0 0 17 17"><rect x="2" y="1" width="3" height="3" fill="#ddd" stroke="#666" stroke-width="0.8"/><rect x="11" y="1" width="3" height="3" fill="#ddd" stroke="#666" stroke-width="0.8"/><path d="M0.5 16.5 V7 L2 4 H5 L6.5 7 V16.5 Z M9.5 16.5 V7 L11 4 H14 L15.5 7 V16.5 Z" fill="#e3e6e8" stroke="#555"/><rect x="6" y="7" width="4" height="3" fill="#bbb" stroke="#555" stroke-width="0.6"/></svg>
<div class="b" style="left:3px;top:242px;width:358px;height:718px;border:1px solid #a0a0a0;background:#fff;"></div>
<div class="b" style="left:25px;top:244px;width:105px;height:22px;background:#d9d9d9;"></div>
<svg class="b" style="left:11px;top:253px;" width="10" height="7" viewBox="0 0 10 7"><path d="M1 1 L5 5 L9 1" fill="none" stroke="#333" stroke-width="1.3"/></svg>
<svg class="b" style="left:26px;top:246px;" width="18" height="18" viewBox="0 0 18 18"><path d="M2.5 3 Q2.5 1 4.5 1 H7 Q9 1 9 3 V10 L15.5 12.5 Q17 13 17 14.5 V15.5 Q17 17 15.5 17 H4 Q2.5 17 2.5 15.5 Z" fill="#e4e7ea" stroke="#6a6f73" stroke-width="1"/><path d="M4.5 1 Q3 1.5 3 3.5 V13.5 Q3 15 5 15.5 L17 17 M9 10 L5 12" fill="none" stroke="#8a9095" stroke-width="0.8"/><path d="M3.5 14 L15.5 15.5 V16.5 H4 Z" fill="#c5cacd"/></svg>
<div class="t " style="left:48.3px;top:241.30px;height:29.4px;line-height:29.4px;font-size:14.7px;color:#000;font-weight:bold;transform:scaleX(0.9606);transform-origin:0 50%;">simple_box</div>
<svg class="b" style="left:24px;top:255px;" width="30" height="160" viewBox="0 0 30 160"><path d="M0.5 0.5 H2" stroke="#666" stroke-dasharray="1 1"/><path d="M11.5 12 V154" stroke="#555" stroke-dasharray="1 1"/><path d="M12 23.5 H22" stroke="#555" stroke-dasharray="1 1"/><path d="M12 45.5 H22" stroke="#555" stroke-dasharray="1 1"/><path d="M12 67.5 H22" stroke="#555" stroke-dasharray="1 1"/><path d="M12 89.5 H22" stroke="#555" stroke-dasharray="1 1"/><path d="M12 111.5 H22" stroke="#555" stroke-dasharray="1 1"/><path d="M12 133.5 H22" stroke="#555" stroke-dasharray="1 1"/><path d="M12 155.5 H22" stroke="#555" stroke-dasharray="1 1"/></svg>
<svg class="b" style="left:33px;top:273px;" width="6" height="10" viewBox="0 0 6 10"><path d="M1 1 L5 5 L1 9" fill="none" stroke="#999" stroke-width="1.2"/></svg>
<svg class="b" style="left:46px;top:271px;" width="16" height="14" viewBox="0 0 16 14"><path d="M0.5 13.5 V1.5 H5 L6.5 3 H12.5 V6" fill="#f2f2f2" stroke="#555"/><path d="M0.5 13.5 L3.5 6 H15.5 L12.5 13.5 Z" fill="#b8bec3" stroke="#555"/></svg>
<div class="t " style="left:67.7px;top:263.40px;height:29.4px;line-height:29.4px;font-size:14.7px;color:#000;font-weight:normal;transform:scaleX(0.9766);transform-origin:0 50%;">Bodies</div>
<svg class="b" style="left:44px;top:292.5px;" width="20" height="13" viewBox="0 0 20 13"><path d="M3.2 1.7 H13.7 L17.9 6.9 H6.5 Z" fill="#eef0f1" stroke="#555" stroke-width="1"/><path d="M6.5 6.9 H17.9 V10.8 H6.5 Z" fill="#e6e8ea" stroke="#555" stroke-width="1"/><path d="M3.2 1.7 L6.5 6.9 V10.8 L2.5 5.5 Z" fill="#b9bec2" stroke="#555" stroke-width="1"/></svg>
<div class="t " style="left:67.5px;top:285.30px;height:29.4px;line-height:29.4px;font-size:14.7px;color:#000;font-weight:normal;transform:scaleX(0.9085);transform-origin:0 50%;">Flange_1</div>
<svg class="b" style="left:46px;top:312.5px;" width="16" height="17" viewBox="0 0 16 17"><path d="M0.5 11 H5 Q9.5 11 9.5 6 V0.5 H15.5 V6 Q15.5 16 5 16 H0.5 Z" fill="#eceeef" stroke="#555"/></svg>
<div class="t " style="left:67.5px;top:307.30px;height:29.4px;line-height:29.4px;font-size:14.7px;color:#000;font-weight:normal;transform:scaleX(0.9055);transform-origin:0 50%;">Bend_1</div>
<svg class="b" style="left:44px;top:336.5px;" width="20" height="13" viewBox="0 0 20 13"><path d="M3.2 1.7 H13.7 L17.9 6.9 H6.5 Z" fill="#eef0f1" stroke="#555" stroke-width="1"/><path d="M6.5 6.9 H17.9 V10.8 H6.5 Z" fill="#e6e8ea" stroke="#555" stroke-width="1"/><path d="M3.2 1.7 L6.5 6.9 V10.8 L2.5 5.5 Z" fill="#b9bec2" stroke="#555" stroke-width="1"/></svg>
<div class="t " style="left:67.5px;top:329.30px;height:29.4px;line-height:29.4px;font-size:14.7px;color:#000;font-weight:normal;transform:scaleX(0.9297);transform-origin:0 50%;">Flange_2</div>
<svg class="b" style="left:46px;top:356.5px;" width="16" height="17" viewBox="0 0 16 17"><path d="M0.5 11 H5 Q9.5 11 9.5 6 V0.5 H15.5 V6 Q15.5 16 5 16 H0.5 Z" fill="#eceeef" stroke="#555"/></svg>
<div class="t " style="left:67.5px;top:351.30px;height:29.4px;line-height:29.4px;font-size:14.7px;color:#000;font-weight:normal;transform:scaleX(0.9312);transform-origin:0 50%;">Bend_2</div>
<svg class="b" style="left:44px;top:380.5px;" width="20" height="13" viewBox="0 0 20 13"><path d="M3.2 1.7 H13.7 L17.9 6.9 H6.5 Z" fill="#eef0f1" stroke="#555" stroke-width="1"/><path d="M6.5 6.9 H17.9 V10.8 H6.5 Z" fill="#e6e8ea" stroke="#555" stroke-width="1"/><path d="M3.2 1.7 L6.5 6.9 V10.8 L2.5 5.5 Z" fill="#b9bec2" stroke="#555" stroke-width="1"/></svg>
<div class="t " style="left:67.5px;top:373.30px;height:29.4px;line-height:29.4px;font-size:14.7px;color:#000;font-weight:normal;transform:scaleX(0.9248);transform-origin:0 50%;">Flange_3</div>
<svg class="b" style="left:46px;top:399.5px;" width="16" height="18" viewBox="0 0 16 18"><path d="M10.5 0.5 H15.5 V10.5 H10.5 Z" fill="#eceeef" stroke="#555"/><path d="M0.5 10.5 H10.5 V15.5 H0.5 Z" fill="#eceeef" stroke="#555"/></svg>
<div class="t " style="left:67.5px;top:395.30px;height:29.4px;line-height:29.4px;font-size:14.7px;color:#000;font-weight:normal;transform:scaleX(0.9364);transform-origin:0 50%;">Junction_1</div>
<div class="b" style="left:3px;top:960px;width:358px;height:4px;background:#f0f0f0;"></div>
<div class="b" style="left:3px;top:964px;width:358px;height:20px;border:1px solid #a8a8a8;background:#fff;"></div>
<div class="b" style="left:8px;top:971px;width:11px;height:11px;border:1px solid #000;background:#fff;"></div>
<div class="b" style="left:10px;top:976px;width:7px;height:1px;background:#000;"></div>
<div class="b" style="left:22px;top:966px;width:316px;height:16px;background:#3c91f6;"></div>
<div class="t " style="left:26px;top:964.00px;height:26px;line-height:26px;font-size:13px;color:#fff;font-weight:bold;transform:scaleX(1.0108);transform-origin:0 50%;">Component</div>
<svg class="b" style="left:343px;top:968px;" width="10" height="15" viewBox="0 0 10 15"><path d="M2 5 L5 2 L8 5" fill="none" stroke="#555" stroke-width="1.3"/><path d="M2 10 L5 13 L8 10" fill="none" stroke="#555" stroke-width="1.3"/></svg>
<div class="b" style="left:370px;top:175px;width:1182px;height:21px;background:#fff;"></div>
<div class="b" style="left:371px;top:176px;width:1px;height:20px;background:#000;"></div>
<div class="b" style="left:503px;top:175px;width:206px;height:20px;background:#f0f0f0;"></div>
<div class="b" style="left:502px;top:175px;width:207px;height:1px;background:#000;"></div>
<div class="b" style="left:502px;top:175px;width:1px;height:21px;background:#000;"></div>
<div class="b" style="left:683px;top:175px;width:1px;height:20px;background:#000;"></div>
<div class="b" style="left:709px;top:175px;width:1px;height:20px;background:#000;"></div>
<div class="b" style="left:502px;top:195px;width:1047px;height:1px;background:#000;"></div>
<div class="t " style="left:384px;top:171.50px;height:28px;line-height:28px;font-size:14px;color:#000;font-weight:bold;transform:scaleX(1.0186);transform-origin:0 50%;">simple_box*</div>
<svg class="b" style="left:482px;top:180px;" width="11" height="11" viewBox="0 0 11 11"><path d="M1 1 L10 10 M10 1 L1 10" stroke="#000" stroke-width="1.8"/></svg>
<div class="t " style="left:524px;top:171.50px;height:27.0px;line-height:27.0px;font-size:13.5px;color:#000;font-weight:normal;transform:scaleX(0.9930);transform-origin:0 50%;">simple_box_unfold*</div>
<svg class="b" style="left:663px;top:180px;" width="11" height="11" viewBox="0 0 11 11"><path d="M1 1 L10 10 M10 1 L1 10" stroke="#999" stroke-width="1.3"/></svg>
<svg class="b" style="left:689px;top:179px;" width="12" height="12" viewBox="0 0 12 12"><path d="M6 1 V11 M1 6 H11" stroke="#222" stroke-width="1.3"/></svg>
<div class="b" style="left:371px;top:196px;width:1178px;height:690px;background:#fff;"></div>
<div class="b" style="left:371px;top:197px;width:1178px;height:2px;background:#646464;"></div>
<div class="b" style="left:371px;top:199px;width:588px;height:686px;background:linear-gradient(#bfcfdf 0px,#d6e3ef 38px,#d6e3f0 100%);border-left:2px solid #5a5a5a;border-bottom:2px solid #5a5a5a;border-top-left-radius:4px;border-top-right-radius:5px;"></div>
<div class="b" style="left:958px;top:205px;width:1px;height:678px;background:#fff;"></div>
<div class="b" style="left:959px;top:199px;width:1px;height:686px;background:#111;"></div>
<div class="b" style="left:960px;top:199px;width:588px;height:686px;background:linear-gradient(#9ab5d3 0px,#b6cde6 38px,#b9d1ea 100%);border-left:1px solid #fff;border-top-right-radius:6px;"></div>
<div class="b" style="left:1545px;top:205px;width:1px;height:678px;background:#4fd3f5;"></div>
<div class="b" style="left:1546px;top:199px;width:1px;height:686px;background:#222;"></div>
<svg class="b" style="left:386px;top:212px;" width="17" height="20" viewBox="0 0 17 20"><defs><linearGradient id="dg" x1="0" y1="1" x2="1" y2="0"><stop offset="0" stop-color="#3b8af0"/><stop offset="1" stop-color="#7ab8ff"/></linearGradient></defs><path d="M0 0 H12.5 L17 4.5 V20 H0 Z" fill="url(#dg)"/><rect x="0" y="0" width="1" height="20" fill="#3a6fc0" opacity="0.7"/><path d="M12.5 0 L17 4.5 H12.5 Z" fill="#e8ecf0"/><path d="M12.5 4.5 H17 V5.3 H12.5 Z" fill="#3d86e8"/><path d="M5 6 H9.3 L12.6 11.5 Q14.8 12.6 14.6 15.2 L14 17.4 H9.6 L10.8 15.2 L9.8 13.6 L6.2 17.4 H2.2 L7.6 9.6 Z" fill="#fff"/></svg>
<div class="t " style="left:408px;top:207.50px;height:30px;line-height:30px;font-size:15px;color:#9aa0a8;font-weight:normal;">simple_box_unfold.dwg</div>
<svg class="b" style="left:973px;top:212px;" width="17" height="20" viewBox="0 0 17 20"><defs><linearGradient id="dg" x1="0" y1="1" x2="1" y2="0"><stop offset="0" stop-color="#3b8af0"/><stop offset="1" stop-color="#7ab8ff"/></linearGradient></defs><path d="M0 0 H12.5 L17 4.5 V20 H0 Z" fill="url(#dg)"/><rect x="0" y="0" width="1" height="20" fill="#3a6fc0" opacity="0.7"/><path d="M12.5 0 L17 4.5 H12.5 Z" fill="#e8ecf0"/><path d="M12.5 4.5 H17 V5.3 H12.5 Z" fill="#3d86e8"/><path d="M5 6 H9.3 L12.6 11.5 Q14.8 12.6 14.6 15.2 L14 17.4 H9.6 L10.8 15.2 L9.8 13.6 L6.2 17.4 H2.2 L7.6 9.6 Z" fill="#fff"/></svg>
<div class="t " style="left:995px;top:207.50px;height:30px;line-height:30px;font-size:15px;color:#000;font-weight:normal;">simple_box.dwg</div>
<div class="b" style="left:819px;top:210px;width:41px;height:23px;background:linear-gradient(#c9d7e5 0%,#c3d2e1 50%,#bccddd 50%,#c8d6e4 100%);border:1px solid #8e9fb5;border-radius:3px;"></div>
<svg class="b" style="left:831px;top:218px;" width="17" height="8" viewBox="0 0 17 8"><rect x="1.5" y="2" width="14" height="5" rx="1" fill="#fff" stroke="#3d4a5c"/></svg>
<div class="b" style="left:863px;top:210px;width:41px;height:23px;background:linear-gradient(#c9d7e5 0%,#c3d2e1 50%,#bccddd 50%,#c8d6e4 100%);border:1px solid #8e9fb5;border-radius:3px;"></div>
<svg class="b" style="left:875px;top:213px;" width="17" height="17" viewBox="0 0 17 17"><rect x="1.5" y="1.5" width="14" height="14" rx="1" fill="#fff" stroke="#3d4a5c"/><rect x="4.5" y="4.5" width="8" height="8" fill="#c4d2e0" stroke="#3d4a5c"/></svg>
<div class="b" style="left:907px;top:210px;width:41px;height:23px;background:linear-gradient(#c9d7e5 0%,#c3d2e1 50%,#bccddd 50%,#c8d6e4 100%);border:1px solid #8e9fb5;border-radius:3px;"></div>
<svg class="b" style="left:918px;top:212px;" width="19" height="19" viewBox="0 0 19 19"><path d="M3 3 L16 16 M16 3 L3 16" stroke="#3d4a5c" stroke-width="6" stroke-linecap="round"/><path d="M3 3 L16 16 M16 3 L3 16" stroke="#eee" stroke-width="4" stroke-linecap="round"/></svg>
<div class="b" style="left:1406px;top:210px;width:41px;height:23px;background:linear-gradient(#c4d6ea 0%,#b9cde3 45%,#9fb9d6 50%,#a9c3df 100%);border:1px solid #6f86a3;border-radius:3px;"></div>
<svg class="b" style="left:1418px;top:218px;" width="17" height="8" viewBox="0 0 17 8"><rect x="1.5" y="2" width="14" height="5" rx="1" fill="#fff" stroke="#3d4a5c"/></svg>
<div class="b" style="left:1450px;top:210px;width:41px;height:23px;background:linear-gradient(#c4d6ea 0%,#b9cde3 45%,#9fb9d6 50%,#a9c3df 100%);border:1px solid #6f86a3;border-radius:3px;"></div>
<svg class="b" style="left:1462px;top:213px;" width="17" height="17" viewBox="0 0 17 17"><rect x="1.5" y="1.5" width="14" height="14" rx="1" fill="#fff" stroke="#3d4a5c"/><rect x="4.5" y="4.5" width="8" height="8" fill="#a2bbd6" stroke="#3d4a5c"/></svg>
<div class="b" style="left:1494px;top:210px;width:41px;height:23px;background:linear-gradient(#e8a08e 0%,#d97a63 45%,#c0402a 50%,#c85a40 100%);border:1px solid #6b1e1e;border-radius:3px;"></div>
<svg class="b" style="left:1505px;top:212px;" width="19" height="19" viewBox="0 0 19 19"><path d="M3 3 L16 16 M16 3 L3 16" stroke="#3d4a5c" stroke-width="6" stroke-linecap="round"/><path d="M3 3 L16 16 M16 3 L3 16" stroke="#eee" stroke-width="4" stroke-linecap="round"/></svg>
<div class="b" style="left:382px;top:237px;width:568px;height:637px;border-top:2px solid #6d6d6d;border-left:2px solid #6d6d6d;background:#fff;"></div>
<div class="b" style="left:969px;top:237px;width:569px;height:637px;border-top:2px solid #6d6d6d;border-left:2px solid #6d6d6d;background:#fff;"></div>
<svg class="b" style="left:0;top:0" width="1920" height="1030" viewBox="0 0 1920 1030">
<defs><clipPath id="cl"><rect x="384" y="239" width="566" height="614"/></clipPath>
<linearGradient id="shL" x1="0" y1="1" x2="1" y2="0"><stop offset="0" stop-color="#000"/><stop offset="0.5" stop-color="#555"/><stop offset="1" stop-color="#aaa"/></linearGradient>
<linearGradient id="shR" x1="0" y1="0" x2="1" y2="1"><stop offset="0" stop-color="#777"/><stop offset="1" stop-color="#b8b8b8"/></linearGradient></defs>
<g clip-path="url(#cl)">
<path d="M384 551.7 L459.6 508.7 L712.4 654.2 L712.4 662 L695 679.3 L773 679.3 L755 662 L755 654.2 L950 542.5 L950 853 L384 853 Z" fill="#85949c" stroke="#6c6c6c" stroke-width="1"/>
<path d="M696.1 683 L403.7 853 L423.5 853 L715 684 Z" fill="#e8c547" stroke="#8a8060" stroke-width="0.7"/>
<path d="M771.9 683 L950 785.3 L950 797.3 L760 690 Z" fill="#e8c547" stroke="#8a8060" stroke-width="0.7"/>
<ellipse cx="734" cy="679.3" rx="39" ry="17.5" fill="#fff"/>
<path d="M695 671.3 A39 17.5 0 0 1 712.4 656.7 L712.4 664.7 A39 17.5 0 0 0 695 679.3 Z" fill="url(#shL)"/>
<path d="M755.6 656.7 A39 17.5 0 0 1 773 671.3 L773 679.3 A39 17.5 0 0 0 755.6 664.7 Z" fill="url(#shR)"/>
<path d="M695 679.3 A39 17.5 0 0 0 773 679.3" fill="none" stroke="#888" stroke-width="0.8"/>
</g>
<path d="M734.5 674 V638" stroke="#0047b3" stroke-width="2.2"/>
<path d="M730 643 L734.5 630 L739 643 Z" fill="#0a62d8"/>
<text x="729" y="630" font-size="13" fill="#2f8fff" font-family="Liberation Sans">Z</text>
<path d="M734.5 674 L765 656" stroke="#00703a" stroke-width="2"/>
<path d="M760 652 L772 653 L765 660 Z" fill="#00703a"/>
<text x="773" y="654" font-size="12" fill="#1ec06a" font-family="Liberation Sans">Y</text>
<path d="M734.5 674 L766 692" stroke="#d86a6a" stroke-width="2"/>
<path d="M762 688 L772 696 L764 697 Z" fill="#e07070"/>
<text x="770" y="701" font-size="12" fill="#ff8b8b" font-family="Liberation Sans">X</text>
</svg>
<svg class="b" style="left:0;top:0" width="1920" height="1030" viewBox="0 0 1920 1030">
<path d="M1054.3 630.6 L1241 609 L1312 672.4 L1121.6 694.9 Z" fill="#66727a"/>
<path d="M1245 516.5 L1312 577.2 L1312 672.4 L1241 609 L1243.3 606 V518 Z" fill="#5f6a71"/>
<path d="M1054.3 537.7 L1245 516.5 L1243.3 518 V606 L1241 609 L1054.3 630.6 Z" fill="#85949c"/>
<path d="M1054.3 630.6 V537.7 L1245 516.5 L1312 577.2 V672.4 L1121.6 694.9 Z" fill="none" stroke="#7c7c7c" stroke-width="1.2"/>
<path d="M1243.6 518 V606" stroke="#777" stroke-width="1"/>
<path d="M1310.8 580 V671" stroke="#d8d8d8" stroke-width="1"/>
<path d="M1122 693.8 L1310 671.5" stroke="#c8c8c8" stroke-width="0.8"/>
<path d="M1055 630.4 L1236 609.5" stroke="#f1c63a" stroke-width="1.8"/>
<path d="M1247.5 613 L1310 670" stroke="#e0b83a" stroke-width="1.8"/>
<path d="M1236 608 Q1238 602 1243 601 Q1247 604 1247.5 611 Q1242 614 1236 610 Z" fill="#fff" stroke="#888" stroke-width="0.5"/>
<path d="M1464 780 V733" stroke="#0a62d8" stroke-width="2.2"/>
<path d="M1460 737 L1464 726 L1468 737 Z" fill="#0a62d8"/>
<text x="1458" y="729" font-size="13" fill="#2f8fff" font-family="Liberation Sans">Z</text>
<path d="M1464 780 L1510 775" stroke="#b34f4f" stroke-width="2"/>
<path d="M1502 771 L1514 774.5 L1503 779 Z" fill="#b34f4f"/>
<text x="1515" y="779" font-size="12" fill="#ff8b8b" font-family="Liberation Sans">X</text>
<path d="M1464 780 L1449 767" stroke="#00703a" stroke-width="2.2"/>
<rect x="1445" y="763" width="5" height="5" fill="#00703a"/>
<text x="1438" y="767" font-size="12" fill="#1ec06a" font-family="Liberation Sans">Y</text>
<circle cx="1486" cy="288" r="38" fill="#fafafa" stroke="#d4d4d4" stroke-width="1"/>
<polygon points="1486.0,260.5 1483.8,255.0 1488.2,255.0" fill="#b0b0b0"/><polygon points="1505.4,268.6 1507.8,263.1 1510.9,266.2" fill="#b0b0b0"/><polygon points="1513.5,288.0 1519.0,285.8 1519.0,290.2" fill="#b0b0b0"/><polygon points="1505.4,307.4 1510.9,309.8 1507.8,312.9" fill="#b0b0b0"/><polygon points="1486.0,315.5 1488.2,321.0 1483.8,321.0" fill="#b0b0b0"/><polygon points="1466.6,307.4 1464.2,312.9 1461.1,309.8" fill="#b0b0b0"/><polygon points="1458.5,288.0 1453.0,290.2 1453.0,285.8" fill="#b0b0b0"/><polygon points="1466.6,268.6 1461.1,266.2 1464.2,263.1" fill="#b0b0b0"/>
<path d="M1291.5 239 V269" stroke="#1a88ff" stroke-width="1"/>
<path d="M1277 239 L1304 264" stroke="#1ec864" stroke-width="1"/>
<path d="M1276 254.5 L1324 249.5" stroke="#ff7272" stroke-width="1"/>
<rect x="1287.5" y="249.5" width="8" height="8" fill="none" stroke="#000" stroke-width="1"/>
</svg>
<div class="b" style="left:384px;top:853px;width:566px;height:21px;background:#f0f0f0;border-bottom:1px solid #a0a0a0;"></div>
<div class="b" style="left:384px;top:853px;width:20px;height:20px;background:#f0f0f0;border-right:1px solid #a0a0a0;border-left:1px solid #fff;"></div>
<svg class="b" style="left:389px;top:858px;" width="10" height="12" viewBox="0 0 10 12"><path d="M1 0.5 V11.5" stroke="#000" stroke-width="1.2"/><path d="M9 0.5 V11.5 L3 6 Z" fill="#000"/></svg>
<div class="b" style="left:405px;top:853px;width:20px;height:20px;background:#f0f0f0;border-right:1px solid #a0a0a0;border-left:1px solid #fff;"></div>
<svg class="b" style="left:410px;top:858px;" width="10" height="12" viewBox="0 0 10 12"><path d="M8 0.5 V11.5 L2 6 Z" fill="#000"/></svg>
<div class="b" style="left:426px;top:853px;width:20px;height:20px;background:#f0f0f0;border-right:1px solid #a0a0a0;border-left:1px solid #fff;"></div>
<svg class="b" style="left:431px;top:858px;" width="10" height="12" viewBox="0 0 10 12"><path d="M2 0.5 V11.5 L8 6 Z" fill="#000"/></svg>
<div class="b" style="left:447px;top:853px;width:20px;height:20px;background:#f0f0f0;border-right:1px solid #a0a0a0;border-left:1px solid #fff;"></div>
<svg class="b" style="left:452px;top:858px;" width="10" height="12" viewBox="0 0 10 12"><path d="M1 0.5 V11.5 L7 6 Z" fill="#000"/><path d="M9 0.5 V11.5" stroke="#000" stroke-width="1.2"/></svg>
<div class="b" style="left:468px;top:853px;width:20px;height:20px;background:#f0f0f0;border-right:1px solid #a0a0a0;border-left:1px solid #fff;"></div>
<svg class="b" style="left:471px;top:854px;" width="15" height="18" viewBox="0 0 15 18"><rect x="1.5" y="1.5" width="12" height="15" fill="#fff" stroke="#000" stroke-width="1.6"/><path d="M4 7 H11 M4 12 H11" stroke="#666" stroke-width="0.8"/></svg>
<div class="b" style="left:489px;top:853px;width:45px;height:20px;background:#fff;border-left:1px solid #000;border-right:2px solid #000;"></div>
<div class="t " style="left:492px;top:851.00px;height:26px;line-height:26px;font-size:13px;color:#000;font-weight:bold;transform:scaleX(1.0121);transform-origin:0 50%;">Model</div>
<div class="b" style="left:533px;top:853px;width:60px;height:20px;background:#f0f0f0;border-top:1px solid #000;border-right:1px solid #000;"></div>
<div class="t " style="left:540px;top:851.30px;height:25.4px;line-height:25.4px;font-size:12.7px;color:#000;font-weight:normal;transform:scaleX(0.9490);transform-origin:0 50%;">Layout1</div>
<div class="b" style="left:593px;top:853px;width:57px;height:20px;background:#f0f0f0;border-top:1px solid #000;border-right:1px solid #000;"></div>
<div class="t " style="left:599px;top:851.30px;height:25.4px;line-height:25.4px;font-size:12.7px;color:#000;font-weight:normal;transform:scaleX(0.9557);transform-origin:0 50%;">Layout2</div>
<div class="b" style="left:650px;top:853px;width:17px;height:20px;background:#f0f0f0;border-top:1px solid #000;border-right:1px solid #a0a0a0;"></div>
<div class="b" style="left:667px;top:853px;width:283px;height:1px;background:#000;"></div>
<div class="t" style="left:458px;width:400px;text-align:center;top:851.00px;height:26px;line-height:26px;font-size:13px;color:#000;font-weight:normal;">+</div>
<div class="b" style="left:971px;top:853px;width:566px;height:21px;background:#f0f0f0;border-bottom:1px solid #a0a0a0;"></div>
<div class="b" style="left:971px;top:853px;width:20px;height:20px;background:#f0f0f0;border-right:1px solid #a0a0a0;border-left:1px solid #fff;"></div>
<svg class="b" style="left:976px;top:858px;" width="10" height="12" viewBox="0 0 10 12"><path d="M1 0.5 V11.5" stroke="#000" stroke-width="1.2"/><path d="M9 0.5 V11.5 L3 6 Z" fill="#000"/></svg>
<div class="b" style="left:992px;top:853px;width:20px;height:20px;background:#f0f0f0;border-right:1px solid #a0a0a0;border-left:1px solid #fff;"></div>
<svg class="b" style="left:997px;top:858px;" width="10" height="12" viewBox="0 0 10 12"><path d="M8 0.5 V11.5 L2 6 Z" fill="#000"/></svg>
<div class="b" style="left:1013px;top:853px;width:20px;height:20px;background:#f0f0f0;border-right:1px solid #a0a0a0;border-left:1px solid #fff;"></div>
<svg class="b" style="left:1018px;top:858px;" width="10" height="12" viewBox="0 0 10 12"><path d="M2 0.5 V11.5 L8 6 Z" fill="#000"/></svg>
<div class="b" style="left:1034px;top:853px;width:20px;height:20px;background:#f0f0f0;border-right:1px solid #a0a0a0;border-left:1px solid #fff;"></div>
<svg class="b" style="left:1039px;top:858px;" width="10" height="12" viewBox="0 0 10 12"><path d="M1 0.5 V11.5 L7 6 Z" fill="#000"/><path d="M9 0.5 V11.5" stroke="#000" stroke-width="1.2"/></svg>
<div class="b" style="left:1055px;top:853px;width:20px;height:20px;background:#f0f0f0;border-right:1px solid #a0a0a0;border-left:1px solid #fff;"></div>
<svg class="b" style="left:1058px;top:854px;" width="15" height="18" viewBox="0 0 15 18"><rect x="1.5" y="1.5" width="12" height="15" fill="#fff" stroke="#000" stroke-width="1.6"/><path d="M4 7 H11 M4 12 H11" stroke="#666" stroke-width="0.8"/></svg>
<div class="b" style="left:1076px;top:853px;width:45px;height:20px;background:#fff;border-left:1px solid #000;border-right:2px solid #000;"></div>
<div class="t " style="left:1079px;top:851.00px;height:26px;line-height:26px;font-size:13px;color:#000;font-weight:bold;transform:scaleX(1.0121);transform-origin:0 50%;">Model</div>
<div class="b" style="left:1120px;top:853px;width:60px;height:20px;background:#f0f0f0;border-top:1px solid #000;border-right:1px solid #000;"></div>
<div class="t " style="left:1127px;top:851.30px;height:25.4px;line-height:25.4px;font-size:12.7px;color:#000;font-weight:normal;transform:scaleX(0.9490);transform-origin:0 50%;">Layout1</div>
<div class="b" style="left:1180px;top:853px;width:57px;height:20px;background:#f0f0f0;border-top:1px solid #000;border-right:1px solid #000;"></div>
<div class="t " style="left:1186px;top:851.30px;height:25.4px;line-height:25.4px;font-size:12.7px;color:#000;font-weight:normal;transform:scaleX(0.9557);transform-origin:0 50%;">Layout2</div>
<div class="b" style="left:1237px;top:853px;width:17px;height:20px;background:#f0f0f0;border-top:1px solid #000;border-right:1px solid #a0a0a0;"></div>
<div class="b" style="left:1254px;top:853px;width:283px;height:1px;background:#000;"></div>
<div class="t" style="left:1045px;width:400px;text-align:center;top:851.00px;height:26px;line-height:26px;font-size:13px;color:#000;font-weight:normal;">+</div>
<div class="b" style="left:950px;top:239px;width:1px;height:636px;background:#f4f4f4;"></div>
<div class="b" style="left:1537px;top:239px;width:1px;height:636px;background:#f4f4f4;"></div>
<div class="b" style="left:384px;top:874px;width:567px;height:1px;background:#fff;"></div>
<div class="b" style="left:969px;top:874px;width:569px;height:1px;background:#fff;"></div>
<div class="b" style="left:382px;top:874px;width:569px;height:1px;background:#fff;"></div>
<div class="b" style="left:959px;top:883px;width:588px;height:2px;background:#111;"></div>
<div class="b" style="left:961px;top:882px;width:585px;height:1px;background:#4fd3f5;"></div>
<div class="b" style="left:366px;top:885px;width:1186px;height:123px;background:#fff;"></div>
<div class="b" style="left:371px;top:886px;width:11px;height:122px;background:#f0f0f0;"></div>
<svg class="b" style="left:371px;top:889px;" width="10" height="10" viewBox="0 0 10 10"><path d="M1.5 1.5 L8.5 8.5 M8.5 1.5 L1.5 8.5" stroke="#555" stroke-width="2"/></svg>
<div class="b" style="left:376px;top:932px;width:1px;height:2px;background:#888;"></div>
<div class="b" style="left:376px;top:935px;width:1px;height:2px;background:#888;"></div>
<div class="b" style="left:376px;top:938px;width:1px;height:2px;background:#888;"></div>
<div class="b" style="left:376px;top:941px;width:1px;height:2px;background:#888;"></div>
<div class="b" style="left:376px;top:944px;width:1px;height:2px;background:#888;"></div>
<div class="b" style="left:382px;top:890px;width:1167px;height:94px;background:#f9f9f9;border-bottom:1px solid #a0a0a0;"></div>
<div class="t m" style="left:387px;top:895.50px;height:30px;line-height:30px;font-size:15px;color:#222;font-weight:normal;">Select entities/subentities to extrude or set [MOde]:</div>
<div class="t m" style="left:387px;top:915.50px;height:30px;line-height:30px;font-size:15px;color:#222;font-weight:normal;">Specify height of extrusion or set [Auto/Create/Subtract/Unite/Both sides/Taper angle/set Direction/set Limit] &lt;Auto&gt;:</div>
<div class="t m" style="left:387px;top:935.50px;height:30px;line-height:30px;font-size:15px;color:#222;font-weight:normal;">:</div>
<div class="t m" style="left:387px;top:955.50px;height:30px;line-height:30px;font-size:15px;color:#222;font-weight:normal;">Changes were successfully transferred to source model</div>
<div class="b" style="left:523px;top:895px;width:2px;height:1px;background:#333;"></div>
<div class="b" style="left:804px;top:894px;width:1px;height:3px;background:#333;"></div>
<div class="b" style="left:804px;top:896px;width:4px;height:1px;background:#333;"></div>
<div class="b" style="left:851px;top:894px;width:1px;height:3px;background:#333;"></div>
<div class="b" style="left:848px;top:896px;width:4px;height:1px;background:#333;"></div>
<div class="b" style="left:1526px;top:895px;width:20px;height:84px;background:#f0f0f0;"></div>
<div class="b" style="left:1527px;top:937px;width:19px;height:21px;background:#c8c8c8;"></div>
<svg class="b" style="left:1531px;top:902px;" width="10" height="7" viewBox="0 0 10 7"><path d="M1 6 L5 1.5 L9 6" fill="none" stroke="#555" stroke-width="1.5"/></svg>
<svg class="b" style="left:1531px;top:964px;" width="10" height="7" viewBox="0 0 10 7"><path d="M1 1 L5 5.5 L9 1" fill="none" stroke="#555" stroke-width="1.5"/></svg>
<div class="b" style="left:382px;top:984px;width:1167px;height:24px;background:#fff;border-left:1px solid #a0a0a0;"></div>
<div class="b" style="left:1549px;top:175px;width:371px;height:11px;background:#f0f0f0;"></div>
<div class="b" style="left:1728px;top:178px;width:1px;height:2px;background:#777;"></div>
<div class="b" style="left:1731px;top:178px;width:1px;height:2px;background:#777;"></div>
<div class="b" style="left:1734px;top:178px;width:1px;height:2px;background:#777;"></div>
<div class="b" style="left:1737px;top:178px;width:1px;height:2px;background:#777;"></div>
<div class="b" style="left:1740px;top:178px;width:1px;height:2px;background:#777;"></div>
<svg class="b" style="left:1909px;top:175px;" width="10" height="9" viewBox="0 0 10 9"><path d="M1.5 1 L8.5 8 M8.5 1 L1.5 8" stroke="#333" stroke-width="1.8"/></svg>
<div class="b" style="left:1553px;top:188px;width:367px;height:820px;background:#fff;border-left:1px solid #a0a0a0;"></div>
<div class="b" style="left:1553px;top:186px;width:367px;height:30px;background:#f0f0f0;"></div>
<div class="b" style="left:1872px;top:189px;width:23px;height:22px;background:#fff;"></div>
<div class="b" style="left:1556px;top:189px;width:316px;height:24px;background:#e1e1e1;border:1px solid #adadad;"></div>
<div class="t " style="left:1560px;top:188.50px;height:26px;line-height:26px;font-size:13px;color:#000;font-weight:normal;">No Selection</div>
<svg class="b" style="left:1855px;top:197px;" width="12" height="8" viewBox="0 0 12 8"><path d="M1 1 L6 6 L11 1" fill="none" stroke="#333" stroke-width="1.1"/></svg>
<svg class="b" style="left:1874px;top:191px;" width="18" height="18" viewBox="0 0 18 18"><defs><linearGradient id="fg" x1="0" y1="0" x2="1" y2="0"><stop offset="0" stop-color="#9aa0a5"/><stop offset="0.5" stop-color="#f2f4f5"/><stop offset="1" stop-color="#a5abb0"/></linearGradient></defs><path d="M1 3.5 Q8.5 0 16 3.5 L10 10.5 V16.5 Q8.5 17.5 7 16.5 V10.5 Z" fill="url(#fg)" stroke="#555" stroke-width="1"/><ellipse cx="8.5" cy="3.3" rx="6.5" ry="1.6" fill="#f4f6f7" stroke="#666" stroke-width="0.8"/><path d="M13 8 L9.5 13 H12 L10.5 17.5 L16 11.5 H13.5 L15.5 8 Z" fill="#ffd21e" stroke="#f05a0a" stroke-width="0.9"/></svg>
<div class="b" style="left:1895px;top:189px;width:23px;height:21px;background:#cce8ff;border:1px solid #99d1ff;"></div>
<svg class="b" style="left:1898px;top:194px;" width="18" height="11" viewBox="0 0 18 11"><path d="M1 5.5 Q9 -1.5 17 5.5 Q9 12.5 1 5.5 Z" fill="#fff" stroke="#444" stroke-width="1.2"/><circle cx="9" cy="5.5" r="3.6" fill="#555" stroke="#7ab8f5" stroke-width="1.2"/><circle cx="8" cy="4.5" r="1" fill="#fff"/></svg>
<div class="b" style="left:1553px;top:216px;width:367px;height:1px;background:#a0a0a0;"></div>
<div class="b" style="left:1572px;top:218px;width:348px;height:20px;background:#3c91f6;"></div>
<div class="b" style="left:1558px;top:223px;width:12px;height:11px;border:1px solid #000;background:#fff;"></div>
<div class="b" style="left:1560px;top:228px;width:8px;height:1px;background:#000;"></div>
<div class="t " style="left:1576px;top:216.00px;height:26px;line-height:26px;font-size:13px;color:#fff;font-weight:bold;">General</div>
<div class="b" style="left:1572px;top:238px;width:348px;height:1px;background:#a0a0a0;"></div>
<div class="b" style="left:1572px;top:239px;width:1px;height:21px;background:#a0a0a0;"></div>
<div class="b" style="left:1680px;top:239px;width:1px;height:21px;background:#a0a0a0;"></div>
<div class="b" style="left:1572px;top:259px;width:348px;height:1px;background:#a0a0a0;"></div>
<div class="t " style="left:1577px;top:237.50px;height:25.0px;line-height:25.0px;font-size:12.5px;color:#000;font-weight:normal;">Color</div>
<div class="b" style="left:1687px;top:242px;width:16px;height:16px;border:1px solid #000;background:#fff;"></div>
<div class="t " style="left:1710px;top:237.50px;height:25.0px;line-height:25.0px;font-size:12.5px;color:#000;font-weight:normal;">ByLayer</div>
<div class="b" style="left:1572px;top:260px;width:1px;height:21px;background:#a0a0a0;"></div>
<div class="b" style="left:1680px;top:260px;width:1px;height:21px;background:#a0a0a0;"></div>
<div class="b" style="left:1572px;top:280px;width:348px;height:1px;background:#a0a0a0;"></div>
<div class="t " style="left:1577px;top:258.50px;height:25.0px;line-height:25.0px;font-size:12.5px;color:#000;font-weight:normal;">Layer</div>
<div class="t " style="left:1685px;top:258.50px;height:25.0px;line-height:25.0px;font-size:12.5px;color:#000;font-weight:normal;">0</div>
<div class="b" style="left:1572px;top:281px;width:1px;height:21px;background:#a0a0a0;"></div>
<div class="b" style="left:1680px;top:281px;width:1px;height:21px;background:#a0a0a0;"></div>
<div class="b" style="left:1572px;top:301px;width:348px;height:1px;background:#a0a0a0;"></div>
<div class="t " style="left:1577px;top:279.50px;height:25.0px;line-height:25.0px;font-size:12.5px;color:#000;font-weight:normal;">Linetype</div>
<div class="b" style="left:1688px;top:291px;width:50px;height:1px;background:#000;"></div>
<div class="t " style="left:1743px;top:279.50px;height:25.0px;line-height:25.0px;font-size:12.5px;color:#000;font-weight:normal;">ByLayer</div>
<div class="b" style="left:1572px;top:302px;width:1px;height:21px;background:#a0a0a0;"></div>
<div class="b" style="left:1680px;top:302px;width:1px;height:21px;background:#a0a0a0;"></div>
<div class="b" style="left:1572px;top:322px;width:348px;height:1px;background:#a0a0a0;"></div>
<div class="t " style="left:1577px;top:300.50px;height:25.0px;line-height:25.0px;font-size:12.5px;color:#000;font-weight:normal;">Linetype scale</div>
<div class="t " style="left:1685px;top:300.50px;height:25.0px;line-height:25.0px;font-size:12.5px;color:#000;font-weight:normal;">1</div>
<div class="b" style="left:1572px;top:323px;width:1px;height:21px;background:#a0a0a0;"></div>
<div class="b" style="left:1680px;top:323px;width:1px;height:21px;background:#a0a0a0;"></div>
<div class="b" style="left:1572px;top:343px;width:348px;height:1px;background:#a0a0a0;"></div>
<div class="t " style="left:1577px;top:321.50px;height:25.0px;line-height:25.0px;font-size:12.5px;color:#000;font-weight:normal;">Lineweight</div>
<div class="b" style="left:1687px;top:332px;width:40px;height:1px;background:#000;"></div>
<div class="t " style="left:1732px;top:321.50px;height:25.0px;line-height:25.0px;font-size:12.5px;color:#000;font-weight:normal;">ByLayer</div>
<div class="b" style="left:1572px;top:344px;width:1px;height:21px;background:#a0a0a0;"></div>
<div class="b" style="left:1680px;top:344px;width:1px;height:21px;background:#a0a0a0;"></div>
<div class="b" style="left:1572px;top:364px;width:348px;height:1px;background:#a0a0a0;"></div>
<div class="t " style="left:1577px;top:342.50px;height:25.0px;line-height:25.0px;font-size:12.5px;color:#000;font-weight:normal;">Transparency</div>
<div class="t " style="left:1685px;top:342.50px;height:25.0px;line-height:25.0px;font-size:12.5px;color:#000;font-weight:normal;">ByLayer</div>
<div class="b" style="left:1572px;top:365px;width:1px;height:21px;background:#a0a0a0;"></div>
<div class="b" style="left:1680px;top:365px;width:1px;height:21px;background:#a0a0a0;"></div>
<div class="b" style="left:1572px;top:385px;width:348px;height:1px;background:#a0a0a0;"></div>
<div class="t " style="left:1577px;top:363.50px;height:25.0px;line-height:25.0px;font-size:12.5px;color:#000;font-weight:normal;">Elevation</div>
<div class="t " style="left:1685px;top:363.50px;height:25.0px;line-height:25.0px;font-size:12.5px;color:#000;font-weight:normal;">0</div>
<div class="b" style="left:1572px;top:386px;width:348px;height:20px;background:#3c91f6;"></div>
<div class="b" style="left:1558px;top:391px;width:12px;height:11px;border:1px solid #000;background:#fff;"></div>
<div class="b" style="left:1560px;top:396px;width:8px;height:1px;background:#000;"></div>
<div class="t " style="left:1576px;top:384.00px;height:26px;line-height:26px;font-size:13px;color:#fff;font-weight:bold;">View</div>
<div class="b" style="left:1572px;top:406px;width:348px;height:1px;background:#a0a0a0;"></div>
<div class="b" style="left:1572px;top:407px;width:1px;height:21px;background:#a0a0a0;"></div>
<div class="b" style="left:1680px;top:407px;width:1px;height:21px;background:#a0a0a0;"></div>
<div class="b" style="left:1572px;top:427px;width:348px;height:1px;background:#a0a0a0;"></div>
<div class="t " style="left:1577px;top:405.50px;height:25.0px;line-height:25.0px;font-size:12.5px;color:#000;font-weight:normal;">Camera</div>
<div class="t " style="left:1685px;top:405.50px;height:25.0px;line-height:25.0px;font-size:12.5px;color:#000;font-weight:normal;">2.9445, 86.656, 31.0037</div>
<div class="b" style="left:1558px;top:412px;width:12px;height:11px;border:1px solid #000;background:#fff;"></div>
<div class="b" style="left:1560px;top:417px;width:8px;height:1px;background:#000;"></div>
<div class="b" style="left:1563px;top:414px;width:1px;height:8px;background:#000;"></div>
<div class="b" style="left:1572px;top:428px;width:1px;height:21px;background:#a0a0a0;"></div>
<div class="b" style="left:1680px;top:428px;width:1px;height:21px;background:#a0a0a0;"></div>
<div class="b" style="left:1572px;top:448px;width:348px;height:1px;background:#a0a0a0;"></div>
<div class="t " style="left:1577px;top:426.50px;height:25.0px;line-height:25.0px;font-size:12.5px;color:#000;font-weight:normal;">Target</div>
<div class="t " style="left:1685px;top:426.50px;height:25.0px;line-height:25.0px;font-size:12.5px;color:#000;font-weight:normal;">3.2622, 87.5454, 30.6751</div>
<div class="b" style="left:1558px;top:433px;width:12px;height:11px;border:1px solid #000;background:#fff;"></div>
<div class="b" style="left:1560px;top:438px;width:8px;height:1px;background:#000;"></div>
<div class="b" style="left:1563px;top:435px;width:1px;height:8px;background:#000;"></div>
<div class="b" style="left:1572px;top:449px;width:1px;height:21px;background:#a0a0a0;"></div>
<div class="b" style="left:1680px;top:449px;width:1px;height:21px;background:#a0a0a0;"></div>
<div class="b" style="left:1572px;top:469px;width:348px;height:1px;background:#a0a0a0;"></div>
<div class="t " style="left:1577px;top:447.50px;height:25.0px;line-height:25.0px;font-size:12.5px;color:#000;font-weight:normal;">Perspective</div>
<div class="t " style="left:1685px;top:447.50px;height:25.0px;line-height:25.0px;font-size:12.5px;color:#000;font-weight:normal;">Off</div>
<div class="b" style="left:1572px;top:470px;width:1px;height:21px;background:#a0a0a0;"></div>
<div class="b" style="left:1680px;top:470px;width:1px;height:21px;background:#a0a0a0;"></div>
<div class="b" style="left:1572px;top:490px;width:348px;height:1px;background:#a0a0a0;"></div>
<div class="t " style="left:1577px;top:468.50px;height:25.0px;line-height:25.0px;font-size:12.5px;color:#000;font-weight:normal;">Lens length</div>
<div class="t " style="left:1685px;top:468.50px;height:25.0px;line-height:25.0px;font-size:12.5px;color:#000;font-weight:normal;">50</div>
<div class="b" style="left:1572px;top:491px;width:1px;height:21px;background:#a0a0a0;"></div>
<div class="b" style="left:1680px;top:491px;width:1px;height:21px;background:#a0a0a0;"></div>
<div class="b" style="left:1572px;top:511px;width:348px;height:1px;background:#a0a0a0;"></div>
<div class="t " style="left:1577px;top:489.50px;height:25.0px;line-height:25.0px;font-size:12.5px;color:#000;font-weight:normal;">Field of view</div>
<div class="t " style="left:1685px;top:489.50px;height:25.0px;line-height:25.0px;font-size:12.5px;color:#000;font-weight:normal;">39</div>
<div class="b" style="left:1572px;top:512px;width:1px;height:21px;background:#a0a0a0;"></div>
<div class="b" style="left:1680px;top:512px;width:1px;height:21px;background:#a0a0a0;"></div>
<div class="b" style="left:1572px;top:532px;width:348px;height:1px;background:#a0a0a0;"></div>
<div class="t " style="left:1577px;top:510.50px;height:25.0px;line-height:25.0px;font-size:12.5px;color:#000;font-weight:normal;">Height</div>
<div class="t " style="left:1685px;top:510.50px;height:25.0px;line-height:25.0px;font-size:12.5px;color:#808080;font-weight:normal;">608.5926</div>
<div class="b" style="left:1572px;top:533px;width:1px;height:21px;background:#a0a0a0;"></div>
<div class="b" style="left:1680px;top:533px;width:1px;height:21px;background:#a0a0a0;"></div>
<div class="b" style="left:1572px;top:553px;width:348px;height:1px;background:#a0a0a0;"></div>
<div class="t " style="left:1577px;top:531.50px;height:25.0px;line-height:25.0px;font-size:12.5px;color:#000;font-weight:normal;">Width</div>
<div class="t " style="left:1685px;top:531.50px;height:25.0px;line-height:25.0px;font-size:12.5px;color:#808080;font-weight:normal;">560.0241</div>
<div class="b" style="left:1572px;top:554px;width:1px;height:21px;background:#a0a0a0;"></div>
<div class="b" style="left:1680px;top:554px;width:1px;height:21px;background:#a0a0a0;"></div>
<div class="b" style="left:1572px;top:574px;width:348px;height:1px;background:#a0a0a0;"></div>
<div class="t " style="left:1577px;top:552.50px;height:25.0px;line-height:25.0px;font-size:12.5px;color:#000;font-weight:normal;">Clipping</div>
<div class="t " style="left:1685px;top:552.50px;height:25.0px;line-height:25.0px;font-size:12.5px;color:#000;font-weight:normal;">Off</div>
<div class="b" style="left:1572px;top:575px;width:1px;height:21px;background:#a0a0a0;"></div>
<div class="b" style="left:1680px;top:575px;width:1px;height:21px;background:#a0a0a0;"></div>
<div class="b" style="left:1572px;top:595px;width:348px;height:1px;background:#a0a0a0;"></div>
<div class="t " style="left:1577px;top:573.50px;height:25.0px;line-height:25.0px;font-size:12.5px;color:#000;font-weight:normal;">Front plane</div>
<div class="t " style="left:1685px;top:573.50px;height:25.0px;line-height:25.0px;font-size:12.5px;color:#000;font-weight:normal;">0</div>
<div class="b" style="left:1572px;top:596px;width:1px;height:21px;background:#a0a0a0;"></div>
<div class="b" style="left:1680px;top:596px;width:1px;height:21px;background:#a0a0a0;"></div>
<div class="b" style="left:1572px;top:616px;width:348px;height:1px;background:#a0a0a0;"></div>
<div class="t " style="left:1577px;top:594.50px;height:25.0px;line-height:25.0px;font-size:12.5px;color:#000;font-weight:normal;">Back plane</div>
<div class="t " style="left:1685px;top:594.50px;height:25.0px;line-height:25.0px;font-size:12.5px;color:#000;font-weight:normal;">0</div>
<div class="b" style="left:1572px;top:617px;width:1px;height:21px;background:#a0a0a0;"></div>
<div class="b" style="left:1680px;top:617px;width:1px;height:21px;background:#a0a0a0;"></div>
<div class="b" style="left:1572px;top:637px;width:348px;height:1px;background:#a0a0a0;"></div>
<div class="t " style="left:1577px;top:615.50px;height:25.0px;line-height:25.0px;font-size:12.5px;color:#000;font-weight:normal;">Visual style</div>
<div class="t " style="left:1685px;top:615.50px;height:25.0px;line-height:25.0px;font-size:12.5px;color:#000;font-weight:normal;">Modeling</div>
<div class="b" style="left:1572px;top:638px;width:348px;height:20px;background:#3c91f6;"></div>
<div class="b" style="left:1558px;top:643px;width:12px;height:11px;border:1px solid #000;background:#fff;"></div>
<div class="b" style="left:1560px;top:648px;width:8px;height:1px;background:#000;"></div>
<div class="t " style="left:1576px;top:636.00px;height:26px;line-height:26px;font-size:13px;color:#fff;font-weight:bold;">Misc</div>
<div class="b" style="left:1572px;top:658px;width:348px;height:1px;background:#a0a0a0;"></div>
<div class="b" style="left:1572px;top:659px;width:1px;height:21px;background:#a0a0a0;"></div>
<div class="b" style="left:1680px;top:659px;width:1px;height:21px;background:#a0a0a0;"></div>
<div class="b" style="left:1572px;top:679px;width:348px;height:1px;background:#a0a0a0;"></div>
<div class="t " style="left:1577px;top:657.50px;height:25.0px;line-height:25.0px;font-size:12.5px;color:#000;font-weight:normal;">Annotation scale</div>
<div class="t " style="left:1685px;top:657.50px;height:25.0px;line-height:25.0px;font-size:12.5px;color:#000;font-weight:normal;">1:1</div>
<div class="b" style="left:1572px;top:680px;width:1px;height:21px;background:#a0a0a0;"></div>
<div class="b" style="left:1680px;top:680px;width:1px;height:21px;background:#a0a0a0;"></div>
<div class="b" style="left:1572px;top:700px;width:348px;height:1px;background:#a0a0a0;"></div>
<div class="t " style="left:1577px;top:678.50px;height:25.0px;line-height:25.0px;font-size:12.5px;color:#000;font-weight:normal;">Default lighting</div>
<div class="t " style="left:1685px;top:678.50px;height:25.0px;line-height:25.0px;font-size:12.5px;color:#000;font-weight:normal;">On</div>
<div class="b" style="left:0px;top:1008px;width:1920px;height:22px;background:#f0f0f0;border-top:1px solid #dcdcdc;"></div>
<div class="t " style="left:2.5px;top:1006.80px;height:26px;line-height:26px;font-size:13px;color:#000;font-weight:normal;transform:scaleX(0.9314);transform-origin:0 50%;">Ready</div>
<div class="t " style="left:925px;top:1006.80px;height:26px;line-height:26px;font-size:13px;color:#000;font-weight:normal;transform:scaleX(0.9902);transform-origin:0 50%;">844.8992, 1366.7414, 0</div>
<div class="t " style="left:1069px;top:1006.80px;height:26px;line-height:26px;font-size:13px;color:#000;font-weight:normal;transform:scaleX(0.9855);transform-origin:0 50%;">Standard</div>
<div class="t " style="left:1129px;top:1006.80px;height:26px;line-height:26px;font-size:13px;color:#000;font-weight:normal;transform:scaleX(0.9855);transform-origin:0 50%;">Standard</div>
<div class="t " style="left:1189px;top:1006.80px;height:26px;line-height:26px;font-size:13px;color:#000;font-weight:normal;transform:scaleX(0.9582);transform-origin:0 50%;">Mechanical</div>
<div class="t " style="left:1264.2px;top:1006.80px;height:26px;line-height:26px;font-size:13px;color:#8a8a8a;font-weight:normal;transform:scaleX(0.8756);transform-origin:0 50%;">SNAP</div>
<div class="t " style="left:1307px;top:1006.80px;height:26px;line-height:26px;font-size:13px;color:#8a8a8a;font-weight:normal;transform:scaleX(0.8492);transform-origin:0 50%;">GRID</div>
<div class="t " style="left:1343.3px;top:1006.80px;height:26px;line-height:26px;font-size:13px;color:#8a8a8a;font-weight:normal;transform:scaleX(0.8843);transform-origin:0 50%;">ORTHO</div>
<div class="t " style="left:1393.1px;top:1006.80px;height:26px;line-height:26px;font-size:13px;color:#000;font-weight:normal;transform:scaleX(0.8598);transform-origin:0 50%;">POLAR</div>
<div class="t " style="left:1440.4px;top:1006.80px;height:26px;line-height:26px;font-size:13px;color:#000;font-weight:normal;transform:scaleX(0.8553);transform-origin:0 50%;">ESNAP</div>
<div class="t " style="left:1486.4px;top:1006.80px;height:26px;line-height:26px;font-size:13px;color:#000;font-weight:normal;transform:scaleX(0.8799);transform-origin:0 50%;">STRACK</div>
<div class="t " style="left:1541.3px;top:1006.80px;height:26px;line-height:26px;font-size:13px;color:#8a8a8a;font-weight:normal;transform:scaleX(0.9370);transform-origin:0 50%;">LWT</div>
<div class="t " style="left:1575px;top:1006.80px;height:26px;line-height:26px;font-size:13px;color:#000;font-weight:normal;transform:scaleX(0.9106);transform-origin:0 50%;">TILE</div>
<div class="t " style="left:1609px;top:1006.80px;height:26px;line-height:26px;font-size:13px;color:#000;font-weight:normal;transform:scaleX(0.8417);transform-origin:0 50%;">DUCS</div>
<div class="t " style="left:1649px;top:1006.80px;height:26px;line-height:26px;font-size:13px;color:#000;font-weight:normal;transform:scaleX(0.8378);transform-origin:0 50%;">DYN</div>
<div class="t " style="left:1680px;top:1006.80px;height:26px;line-height:26px;font-size:13px;color:#000;font-weight:normal;transform:scaleX(0.8519);transform-origin:0 50%;">QUAD</div>
<div class="t " style="left:1721px;top:1006.80px;height:26px;line-height:26px;font-size:13px;color:#000;font-weight:normal;transform:scaleX(0.8775);transform-origin:0 50%;">RT</div>
<div class="t " style="left:1745px;top:1006.80px;height:26px;line-height:26px;font-size:13px;color:#000;font-weight:normal;transform:scaleX(0.8603);transform-origin:0 50%;">HKA</div>
<div class="t " style="left:1776px;top:1006.80px;height:26px;line-height:26px;font-size:13px;color:#8a8a8a;font-weight:normal;transform:scaleX(0.8677);transform-origin:0 50%;">LOCKUI</div>
<div class="t " style="left:1827px;top:1006.80px;height:26px;line-height:26px;font-size:13px;color:#000;font-weight:normal;transform:scaleX(0.9010);transform-origin:0 50%;">None</div>
<div class="b" style="left:1065px;top:1011px;width:1px;height:17px;background:#d0d0d0;"></div>
<div class="b" style="left:1125px;top:1011px;width:1px;height:17px;background:#d0d0d0;"></div>
<div class="b" style="left:1185px;top:1011px;width:1px;height:17px;background:#d0d0d0;"></div>
<div class="b" style="left:1256px;top:1011px;width:1px;height:17px;background:#d0d0d0;"></div>
<div class="b" style="left:1299px;top:1011px;width:1px;height:17px;background:#d0d0d0;"></div>
<div class="b" style="left:1339px;top:1011px;width:1px;height:17px;background:#d0d0d0;"></div>
<div class="b" style="left:1389px;top:1011px;width:1px;height:17px;background:#d0d0d0;"></div>
<div class="b" style="left:1436px;top:1011px;width:1px;height:17px;background:#d0d0d0;"></div>
<div class="b" style="left:1482px;top:1011px;width:1px;height:17px;background:#d0d0d0;"></div>
<div class="b" style="left:1537px;top:1011px;width:1px;height:17px;background:#d0d0d0;"></div>
<div class="b" style="left:1571px;top:1011px;width:1px;height:17px;background:#d0d0d0;"></div>
<div class="b" style="left:1605px;top:1011px;width:1px;height:17px;background:#d0d0d0;"></div>
<div class="b" style="left:1645px;top:1011px;width:1px;height:17px;background:#d0d0d0;"></div>
<div class="b" style="left:1676px;top:1011px;width:1px;height:17px;background:#d0d0d0;"></div>
<div class="b" style="left:1717px;top:1011px;width:1px;height:17px;background:#d0d0d0;"></div>
<div class="b" style="left:1741px;top:1011px;width:1px;height:17px;background:#d0d0d0;"></div>
<div class="b" style="left:1772px;top:1011px;width:1px;height:17px;background:#d0d0d0;"></div>
<div class="b" style="left:1823px;top:1011px;width:1px;height:17px;background:#d0d0d0;"></div>
<div class="b" style="left:1860px;top:1011px;width:1px;height:17px;background:#d0d0d0;"></div>
<svg class="b" style="left:1864px;top:1016px;" width="9" height="6" viewBox="0 0 9 6"><path d="M0 0 H9 L4.5 5 Z" fill="#000"/></svg>
<div class="b" style="left:1917px;top:1016px;width:2px;height:2px;background:#bbb;"></div>
<div class="b" style="left:1913px;top:1020px;width:2px;height:2px;background:#bbb;"></div>
<div class="b" style="left:1917px;top:1020px;width:2px;height:2px;background:#bbb;"></div>
<div class="b" style="left:1909px;top:1024px;width:2px;height:2px;background:#bbb;"></div>
<div class="b" style="left:1913px;top:1024px;width:2px;height:2px;background:#bbb;"></div>
<div class="b" style="left:1917px;top:1024px;width:2px;height:2px;background:#bbb;"></div>
</body></html>
